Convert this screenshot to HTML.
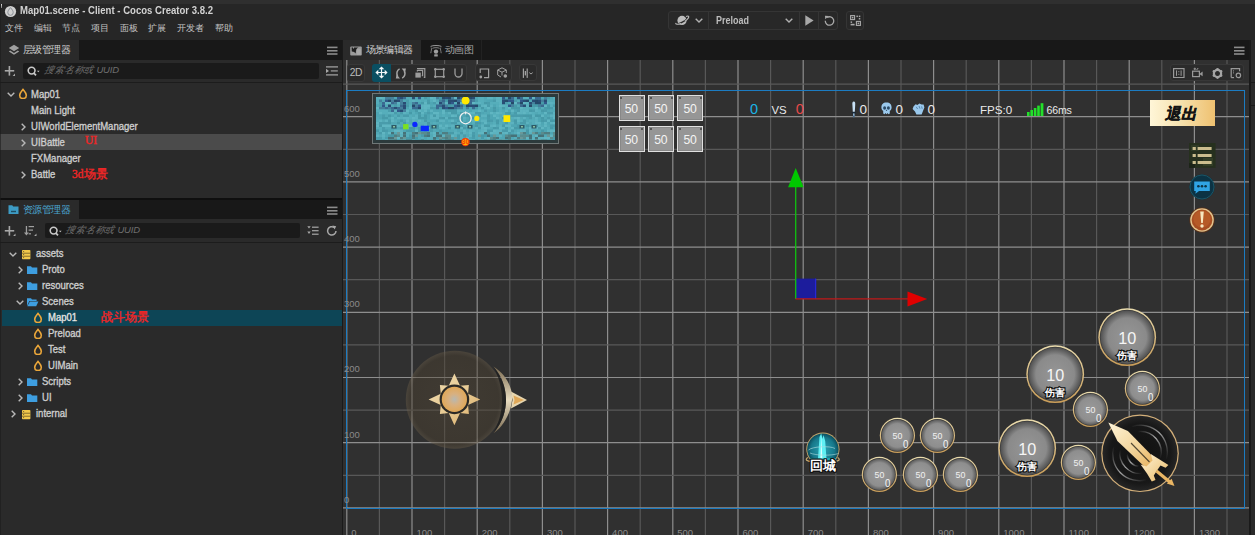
<!DOCTYPE html>
<html><head><meta charset="utf-8">
<style>
*{margin:0;padding:0;box-sizing:border-box}
html,body{width:1255px;height:535px;overflow:hidden;background:#262626;font-family:"Liberation Sans",sans-serif;position:relative}
.a{position:absolute}
.t{position:absolute;white-space:nowrap;line-height:1}
#topstrip{left:0;top:0;width:1255px;height:4px;background:#2f2f2f}
#title{left:19.5px;top:6px;font-size:10.3px;font-weight:bold;color:#d2d2d2;transform-origin:0 0;transform:scaleX(0.929)}
.menu{top:23.9px;font-size:9.1px;color:#c2c2c2}
/* left panel */
.tabbar{background:#181818}
.tab{background:#2a2a2a}
.panelbg{background:#2a2a2a}
.row{position:absolute;left:0;width:342px;height:16px}
.lbl{position:absolute;font-size:10.3px;color:#cdcdcd;white-space:nowrap;line-height:16px;font-weight:normal;-webkit-text-stroke:0.35px #cdcdcd;transform-origin:0 0;transform:translateY(1.1px) scaleX(0.925)}
.tabt{font-size:9.6px;color:#d0d0d0;letter-spacing:-0.55px}
.sbox{background:#1a1a1a;border-radius:2px}
.ph{font-size:9.5px;letter-spacing:-0.2px;color:#6e6e6e;font-style:italic}
.rl{font-size:9.5px;color:#8a8a8a}
.tbg{background:#2b2b2b;border:1px solid #383838;border-radius:3px}
.box50{width:26px;height:26px;background:#969696;border:1.3px solid #e0e0e0;box-shadow:inset 0 0 0 0.5px #7a7a7a}
.box50 span{position:absolute;left:0;top:6.8px;width:23.2px;text-align:center;font-size:12.2px;color:#f4f4f4;line-height:1;letter-spacing:-0.3px}
.box50:before,.box50:after{content:"";position:absolute;top:0.6px;width:2px;height:2px;background:#555}
.box50:before{left:0.6px}.box50:after{right:0.6px}
.red{position:absolute;color:#ee2626;font-size:11.5px;font-weight:normal;-webkit-text-stroke:0.4px #ee2626;font-family:"Liberation Serif",serif;white-space:nowrap;line-height:16px}
</style></head><body>
<div id="topstrip" class="a"></div>
<!-- title icon -->
<div class="a" style="left:1.2px;top:4px;width:1.3px;height:3.5px;background:linear-gradient(#ddd,#777)"></div>
<svg class="a" style="left:4px;top:5px" width="13" height="13" viewBox="0 0 13 13">
<circle cx="6.5" cy="6.5" r="5.6" fill="#d0d0d0"/>
<path d="M6.5 2.6 C8.2 4.6 9.2 6 9.2 7.6 A2.7 2.7 0 0 1 3.8 7.6 C3.8 6 4.8 4.6 6.5 2.6Z" fill="none" stroke="#8a8f96" stroke-width="1"/>
</svg>
<div id="title" class="t">Map01.scene - Client - Cocos Creator 3.8.2</div>
<div class="t menu" style="left:5px">文件</div>
<div class="t menu" style="left:34px">编辑</div>
<div class="t menu" style="left:62px">节点</div>
<div class="t menu" style="left:91px">项目</div>
<div class="t menu" style="left:120px">面板</div>
<div class="t menu" style="left:148px">扩展</div>
<div class="t menu" style="left:177px">开发者</div>
<div class="t menu" style="left:215px">帮助</div>


<!-- top toolbar -->
<div class="a" style="left:668.2px;top:11.3px;width:170.2px;height:18.6px;background:#282828;border:1px solid #353535;border-radius:3px"></div>
<div class="a" style="left:708px;top:12px;width:1px;height:17px;background:#353535"></div>
<div class="a" style="left:799px;top:12px;width:1px;height:17px;background:#353535"></div>
<div class="a" style="left:818.3px;top:12px;width:1px;height:17px;background:#353535"></div>
<svg class="a" style="left:675px;top:14px" width="15" height="12" viewBox="0 0 15 12"><circle cx="7" cy="6.4" r="4.6" fill="#bcbcbc"/><path d="M0.8 9.6 C2 11 10 8 14 3" fill="none" stroke="#282828" stroke-width="1.4"/><path d="M1 9 C0 10.6 3 10.6 6 9.4 M9.8 7.4 C12.5 5.4 14.6 3 13.4 2.2 C12.8 1.9 11.8 2.2 11 2.6" fill="none" stroke="#bcbcbc" stroke-width="1.1"/></svg>
<svg class="a" style="left:695px;top:17.5px" width="8" height="5" viewBox="0 0 8 5"><path d="M0.7 0.7 L4 4 L7.3 0.7" fill="none" stroke="#b0b0b0" stroke-width="1.4"/></svg>
<div class="t" style="left:715.6px;top:15.6px;font-size:10.3px;font-weight:bold;color:#bdbdbd;transform-origin:0 0;transform:scaleX(0.87)">Preload</div>
<svg class="a" style="left:785px;top:17.5px" width="8" height="5" viewBox="0 0 8 5"><path d="M0.7 0.7 L4 4 L7.3 0.7" fill="none" stroke="#b0b0b0" stroke-width="1.4"/></svg>
<svg class="a" style="left:805px;top:15px" width="9" height="11" viewBox="0 0 9 11"><path d="M0.3 0.3 L8.6 5.5 L0.3 10.7Z" fill="#a8a8a8"/></svg>
<svg class="a" style="left:823.5px;top:15px" width="11" height="11" viewBox="0 0 11 11"><path d="M3 2.6 A4.2 4.2 0 1 1 1.3 5.8" fill="none" stroke="#a8a8a8" stroke-width="1.3"/><path d="M1 0.8 L4.8 1 L1.2 4.2Z" fill="#a8a8a8"/></svg>
<div class="a" style="left:845.9px;top:11.3px;width:18.3px;height:18.6px;background:#282828;border:1px solid #353535;border-radius:3px"></div>
<svg class="a" style="left:850px;top:15px" width="11" height="11" viewBox="0 0 11 11"><rect x="0.6" y="0.6" width="4" height="4" fill="none" stroke="#aaa" stroke-width="1.1"/><rect x="1.8" y="1.8" width="1.6" height="1.6" fill="#aaa"/><rect x="6.4" y="0.6" width="1.5" height="1.5" fill="#aaa"/><rect x="8.8" y="0.6" width="1.5" height="1.5" fill="#aaa"/><rect x="8.8" y="3" width="1.5" height="1.5" fill="#aaa"/><rect x="0.6" y="6.4" width="1.5" height="1.5" fill="#aaa"/><rect x="0.6" y="8.8" width="4" height="1.6" fill="#aaa"/><rect x="6.4" y="6.4" width="4" height="4" fill="none" stroke="#aaa" stroke-width="1.1"/><rect x="7.6" y="7.6" width="1.6" height="1.6" fill="#aaa"/></svg>

<!-- ============ LEFT PANELS ============ -->
<div class="a tabbar" style="left:0;top:40px;width:342px;height:20px"></div>
<div class="a tab" style="left:0;top:40px;width:79px;height:20px"></div>
<div class="a panelbg" style="left:0;top:60px;width:342px;height:138px"></div>
<div class="a" style="left:0;top:198.2px;width:342px;height:2px;background:#0f0f0f"></div>
<div class="a tabbar" style="left:0;top:200px;width:342px;height:19px"></div>
<div class="a tab" style="left:0;top:200px;width:79px;height:19px"></div>
<div class="a panelbg" style="left:0;top:219px;width:342px;height:316px"></div>
<div class="a" style="left:342px;top:40px;width:1px;height:495px;background:#1a1a1a"></div>


<!-- hierarchy tab -->
<svg class="a" style="left:8px;top:44px" width="12" height="13" viewBox="0 0 12 13">
<path d="M6 0.8 L11.2 4 L6 7.2 L0.8 4Z" fill="#a0a0a0"/>
<path d="M2.2 6.6 L0.8 7.6 L6 10.8 L11.2 7.6 L9.8 6.6 L6 9 Z" fill="#a0a0a0"/>
</svg>
<div class="t tabt" style="left:23px;top:45px">层级管理器</div>
<svg class="a" style="left:327px;top:46px" width="11" height="10" viewBox="0 0 11 10"><rect x="0" y="0.6" width="10.5" height="1.6" fill="#8c8c8c"/><rect x="0" y="4" width="10.5" height="1.6" fill="#8c8c8c"/><rect x="0" y="7.2" width="10.5" height="1.6" fill="#8c8c8c"/></svg>
<!-- hierarchy toolbar -->
<svg class="a" style="left:4px;top:65px" width="12" height="12" viewBox="0 0 12 12"><rect x="4.6" y="1" width="1.6" height="9.6" fill="#a8a8a8"/><rect x="0.8" y="5" width="9.4" height="1.6" fill="#a8a8a8"/><path d="M11 8.6 L11 11 L8.6 11Z" fill="#a8a8a8"/></svg>
<div class="a sbox" style="left:23px;top:63px;width:296px;height:15.5px"></div>
<svg class="a" style="left:27px;top:66px" width="13" height="11" viewBox="0 0 13 11"><circle cx="4.6" cy="4.6" r="3.4" fill="none" stroke="#c8c8c8" stroke-width="1.6"/><path d="M6.8 7 L9 9.4" stroke="#c8c8c8" stroke-width="1.8"/><path d="M10 4.8 L12.6 4.8 L11.3 6.2Z" fill="#c8c8c8"/></svg>
<div class="t ph" style="left:45px;top:65px"><span style="display:inline-block;transform:skewX(-13deg)">搜索名称或</span> UUID</div>
<svg class="a" style="left:326px;top:66px" width="12" height="10" viewBox="0 0 12 10"><rect x="0" y="0.3" width="12" height="1.2" fill="#a8a8a8"/><rect x="0" y="8.3" width="12" height="1.2" fill="#a8a8a8"/><rect x="4.8" y="4.2" width="7" height="1.4" fill="#909090"/><path d="M0 2.8 L3 4.9 L0 7Z" fill="#a8a8a8"/></svg>
<div class="a" style="left:0;top:82px;width:342px;height:1px;background:#1c1c1c"></div>
<!-- hierarchy tree -->
<div class="row" style="top:134.3px;height:15.6px;background:#4b4b4b"></div>
<svg class="a" style="left:7px;top:92px" width="8" height="5" viewBox="0 0 8 5"><path d="M0.7 0.7 L4 4 L7.3 0.7" fill="none" stroke="#b8b8b8" stroke-width="1.4"/></svg>
<svg class="a drop" style="left:18px;top:88px" width="10" height="11" viewBox="0 0 10 11"><path d="M5 1.4 C6.2 3 8.3 4.8 8.3 7.2 A3.3 3.3 0 0 1 1.7 7.2 C1.7 4.8 3.8 3 5 1.4Z" fill="none" stroke="#eaa63a" stroke-width="1.6" stroke-linejoin="round"/><path d="M5 0.3 L5.8 2 L4.2 2Z" fill="#eaa63a"/></svg>
<div class="lbl" style="left:31px;top:86px">Map01</div>
<div class="lbl" style="left:31px;top:102px">Main Light</div>
<svg class="a" style="left:21px;top:122.5px" width="5" height="8" viewBox="0 0 5 8"><path d="M0.7 0.7 L4 4 L0.7 7.3" fill="none" stroke="#b8b8b8" stroke-width="1.4"/></svg>
<div class="lbl" style="left:31px;top:118px">UIWorldElementManager</div>
<svg class="a" style="left:21px;top:138.5px" width="5" height="8" viewBox="0 0 5 8"><path d="M0.7 0.7 L4 4 L0.7 7.3" fill="none" stroke="#b8b8b8" stroke-width="1.4"/></svg>
<div class="lbl" style="left:31px;top:134px">UIBattle</div>
<div class="red" style="left:85px;top:132.2px">UI</div>
<div class="lbl" style="left:31px;top:150px">FXManager</div>
<svg class="a" style="left:21px;top:170.5px" width="5" height="8" viewBox="0 0 5 8"><path d="M0.7 0.7 L4 4 L0.7 7.3" fill="none" stroke="#b8b8b8" stroke-width="1.4"/></svg>
<div class="lbl" style="left:31px;top:166px">Battle</div>
<div class="red" style="left:72px;top:165.5px">3d场景</div>

<!-- assets tab -->
<svg class="a" style="left:8px;top:204px" width="11" height="11" viewBox="0 0 11 11"><path d="M0.5 1.2 L4.2 1.2 L5.2 2.4 L10.5 2.4 L10.5 10 L0.5 10Z" fill="#3d9bc4"/><rect x="3" y="6.8" width="5" height="1.4" fill="#1f4c60"/></svg>
<div class="t tabt" style="left:23px;top:204.5px;color:#4aa6d0">资源管理器</div>
<svg class="a" style="left:327px;top:206px" width="11" height="10" viewBox="0 0 11 10"><rect x="0" y="0.6" width="10.5" height="1.6" fill="#8c8c8c"/><rect x="0" y="4" width="10.5" height="1.6" fill="#8c8c8c"/><rect x="0" y="7.2" width="10.5" height="1.6" fill="#8c8c8c"/></svg>
<!-- asset toolbar -->
<svg class="a" style="left:4px;top:225px" width="12" height="12" viewBox="0 0 12 12"><rect x="4.6" y="1" width="1.6" height="9.6" fill="#a8a8a8"/><rect x="0.8" y="5" width="9.4" height="1.6" fill="#a8a8a8"/><path d="M11.5 8.6 L11.5 11 L9.1 11Z" fill="#a8a8a8"/></svg>
<svg class="a" style="left:24px;top:225px" width="13" height="12" viewBox="0 0 13 12"><rect x="1.8" y="1" width="1.3" height="8" fill="#a0a0a0"/><path d="M0 7.6 L4.8 7.6 L2.4 10.4Z" fill="#a0a0a0"/><rect x="4.6" y="1" width="5.4" height="1.2" fill="#a0a0a0"/><rect x="4.6" y="4.5" width="4.4" height="1.2" fill="#a0a0a0"/><rect x="4.6" y="8.2" width="2.4" height="1.2" fill="#a0a0a0"/><path d="M12.5 8.6 L12.5 11 L10.1 11Z" fill="#a8a8a8"/></svg>
<div class="a sbox" style="left:44.5px;top:223px;width:255px;height:15px"></div>
<svg class="a" style="left:48.5px;top:226px" width="13" height="11" viewBox="0 0 13 11"><circle cx="4.6" cy="4.6" r="3.4" fill="none" stroke="#c8c8c8" stroke-width="1.6"/><path d="M6.8 7 L9 9.4" stroke="#c8c8c8" stroke-width="1.8"/><path d="M10 4.8 L12.6 4.8 L11.3 6.2Z" fill="#c8c8c8"/></svg>
<div class="t ph" style="left:66px;top:225px"><span style="display:inline-block;transform:skewX(-13deg)">搜索名称或</span> UUID</div>
<svg class="a" style="left:307px;top:225px" width="13" height="11" viewBox="0 0 13 11"><path d="M0.3 1.3 L3.7 1.3 L2 3.6Z M0.3 6.6 L3.7 6.6 L2 8.9Z" fill="#a8a8a8"/><rect x="5" y="1.6" width="6.6" height="1.2" fill="#a8a8a8"/><rect x="5" y="5.1" width="6.6" height="1.2" fill="#a8a8a8"/><rect x="5" y="8.6" width="6.6" height="1.2" fill="#a8a8a8"/></svg>
<svg class="a" style="left:326px;top:225px" width="12" height="12" viewBox="0 0 12 12"><path d="M10 6 A4.2 4.2 0 1 1 8.2 2.4" fill="none" stroke="#a8a8a8" stroke-width="1.5"/><path d="M6.4 0.6 L10.2 1.2 L8.6 4.6Z" fill="#a8a8a8"/></svg>
<div class="a" style="left:0;top:241.5px;width:342px;height:1px;background:#1c1c1c"></div>
<!-- asset tree -->
<div class="row" style="top:309.5px;height:16px;left:2px;width:340px;background:#0d4556"></div>

<svg class="a" style="left:9px;top:251.5px" width="8" height="5" viewBox="0 0 8 5"><path d="M0.7 0.7 L4 4 L7.3 0.7" fill="none" stroke="#b8b8b8" stroke-width="1.4"/></svg>
<svg class="a" style="left:21.8px;top:249.7px" width="9" height="10" viewBox="0 0 9 10"><rect x="0" y="0" width="8.4" height="9.2" rx="0.8" fill="#f2c94c"/><rect x="0" y="2.8" width="8.4" height="0.7" fill="#5a4a20"/><rect x="0" y="5.8" width="8.4" height="0.7" fill="#5a4a20"/><rect x="1.2" y="1.1" width="0.9" height="0.9" fill="#5a4a20"/><rect x="1.2" y="4.1" width="0.9" height="0.9" fill="#5a4a20"/><rect x="1.2" y="7.2" width="0.9" height="0.9" fill="#5a4a20"/></svg>
<div class="lbl" style="left:35.5px;top:244.7px">assets</div>
<svg class="a" style="left:17.5px;top:265.5px" width="5" height="8" viewBox="0 0 5 8"><path d="M0.7 0.7 L4 4 L0.7 7.3" fill="none" stroke="#b8b8b8" stroke-width="1.4"/></svg>
<svg class="a" style="left:27px;top:266.0px" width="11" height="9" viewBox="0 0 11 9"><path d="M0 0.3 L4 0.3 L5 1.4 L10.3 1.4 L10.3 8 L0 8Z" fill="#3e9ee0"/></svg>
<div class="lbl" style="left:41.5px;top:260.7px">Proto</div>
<svg class="a" style="left:17.5px;top:281.5px" width="5" height="8" viewBox="0 0 5 8"><path d="M0.7 0.7 L4 4 L0.7 7.3" fill="none" stroke="#b8b8b8" stroke-width="1.4"/></svg>
<svg class="a" style="left:27px;top:282.0px" width="11" height="9" viewBox="0 0 11 9"><path d="M0 0.3 L4 0.3 L5 1.4 L10.3 1.4 L10.3 8 L0 8Z" fill="#3e9ee0"/></svg>
<div class="lbl" style="left:41.5px;top:276.7px">resources</div>
<svg class="a" style="left:16px;top:299.5px" width="8" height="5" viewBox="0 0 8 5"><path d="M0.7 0.7 L4 4 L7.3 0.7" fill="none" stroke="#b8b8b8" stroke-width="1.4"/></svg>
<svg class="a" style="left:27px;top:297.8px" width="12" height="9" viewBox="0 0 12 9"><path d="M0 0.3 L4 0.3 L5 1.4 L9.6 1.4 L9.6 3 L2.4 3 L0 8Z" fill="#3e9ee0"/><path d="M2.8 3.6 L11.4 3.6 L9.2 8.2 L0.4 8.2Z" fill="#3e9ee0"/></svg>
<div class="lbl" style="left:41.5px;top:292.7px">Scenes</div>
<svg class="a" style="left:33px;top:311.6px" width="10" height="11" viewBox="0 0 10 11"><path d="M5 1.4 C6.2 3 8.3 4.8 8.3 7.2 A3.3 3.3 0 0 1 1.7 7.2 C1.7 4.8 3.8 3 5 1.4Z" fill="none" stroke="#eaa63a" stroke-width="1.6" stroke-linejoin="round"/><path d="M5 0.3 L5.8 2 L4.2 2Z" fill="#eaa63a"/></svg>
<div class="lbl" style="left:48.3px;top:308.7px;color:#fff">Map01</div>
<svg class="a" style="left:33px;top:327.6px" width="10" height="11" viewBox="0 0 10 11"><path d="M5 1.4 C6.2 3 8.3 4.8 8.3 7.2 A3.3 3.3 0 0 1 1.7 7.2 C1.7 4.8 3.8 3 5 1.4Z" fill="none" stroke="#eaa63a" stroke-width="1.6" stroke-linejoin="round"/><path d="M5 0.3 L5.8 2 L4.2 2Z" fill="#eaa63a"/></svg>
<div class="lbl" style="left:48.3px;top:324.7px">Preload</div>
<svg class="a" style="left:33px;top:343.6px" width="10" height="11" viewBox="0 0 10 11"><path d="M5 1.4 C6.2 3 8.3 4.8 8.3 7.2 A3.3 3.3 0 0 1 1.7 7.2 C1.7 4.8 3.8 3 5 1.4Z" fill="none" stroke="#eaa63a" stroke-width="1.6" stroke-linejoin="round"/><path d="M5 0.3 L5.8 2 L4.2 2Z" fill="#eaa63a"/></svg>
<div class="lbl" style="left:48.3px;top:340.7px">Test</div>
<svg class="a" style="left:33px;top:359.6px" width="10" height="11" viewBox="0 0 10 11"><path d="M5 1.4 C6.2 3 8.3 4.8 8.3 7.2 A3.3 3.3 0 0 1 1.7 7.2 C1.7 4.8 3.8 3 5 1.4Z" fill="none" stroke="#eaa63a" stroke-width="1.6" stroke-linejoin="round"/><path d="M5 0.3 L5.8 2 L4.2 2Z" fill="#eaa63a"/></svg>
<div class="lbl" style="left:48.3px;top:356.7px">UIMain</div>
<svg class="a" style="left:17.5px;top:377.5px" width="5" height="8" viewBox="0 0 5 8"><path d="M0.7 0.7 L4 4 L0.7 7.3" fill="none" stroke="#b8b8b8" stroke-width="1.4"/></svg>
<svg class="a" style="left:27px;top:378.0px" width="11" height="9" viewBox="0 0 11 9"><path d="M0 0.3 L4 0.3 L5 1.4 L10.3 1.4 L10.3 8 L0 8Z" fill="#3e9ee0"/></svg>
<div class="lbl" style="left:41.5px;top:372.7px">Scripts</div>
<svg class="a" style="left:17.5px;top:393.5px" width="5" height="8" viewBox="0 0 5 8"><path d="M0.7 0.7 L4 4 L0.7 7.3" fill="none" stroke="#b8b8b8" stroke-width="1.4"/></svg>
<svg class="a" style="left:27px;top:394.0px" width="11" height="9" viewBox="0 0 11 9"><path d="M0 0.3 L4 0.3 L5 1.4 L10.3 1.4 L10.3 8 L0 8Z" fill="#3e9ee0"/></svg>
<div class="lbl" style="left:41.5px;top:388.7px">UI</div>
<svg class="a" style="left:11px;top:409.5px" width="5" height="8" viewBox="0 0 5 8"><path d="M0.7 0.7 L4 4 L0.7 7.3" fill="none" stroke="#b8b8b8" stroke-width="1.4"/></svg>
<svg class="a" style="left:21.8px;top:409.7px" width="9" height="10" viewBox="0 0 9 10"><rect x="0" y="0" width="8.4" height="9.2" rx="0.8" fill="#f2c94c"/><rect x="0" y="2.8" width="8.4" height="0.7" fill="#5a4a20"/><rect x="0" y="5.8" width="8.4" height="0.7" fill="#5a4a20"/><rect x="1.2" y="1.1" width="0.9" height="0.9" fill="#5a4a20"/><rect x="1.2" y="4.1" width="0.9" height="0.9" fill="#5a4a20"/><rect x="1.2" y="7.2" width="0.9" height="0.9" fill="#5a4a20"/></svg>
<div class="lbl" style="left:35.5px;top:404.7px">internal</div>
<div class="red" style="left:101px;top:309px">战斗场景</div>
<div class="a" style="left:0;top:4px;width:1px;height:531px;background:#1c1c1c;opacity:0.6"></div>
<!-- ============ SCENE PANEL ============ -->
<div class="a tabbar" style="left:343px;top:40px;width:906px;height:20px"></div>
<div class="a tab" style="left:343px;top:40px;width:78px;height:20px"></div>

<!-- scene tabs -->
<svg class="a" style="left:350px;top:45.5px" width="12" height="10" viewBox="0 0 12 10"><rect x="0.2" y="0.4" width="11.6" height="9.2" rx="1" fill="#9a9a9a"/><path d="M1.6 1.4 L3 1.4 L3 2.6 L4 2.6 L4 1.4 L8.6 1.4 L7.4 2 L6.4 3.2 L6 5 L5.6 7.6 L4.8 6.4 L3.4 5.8 L1.8 5.6Z" fill="#1e1e1e"/><rect x="6.8" y="3" width="4" height="5.8" fill="#a8a8a8"/></svg>
<div class="t tabt" style="left:365.5px;top:45px">场景编辑器</div>
<svg class="a" style="left:429.5px;top:44.5px" width="12" height="12" viewBox="0 0 12 12"><path d="M0.6 1.4 C3 0.2 9 0.2 11.4 1.4" fill="none" stroke="#9a9a9a" stroke-width="1"/><path d="M1.2 2.6 C2 4 1 6 0.8 8.2 M10.8 2.6 C10 4 11 6 11.2 8.2" fill="none" stroke="#8a8a8a" stroke-width="0.9"/><path d="M2.4 3.4 C4 2.4 8 2.4 9.6 3.4" fill="none" stroke="#8a8a8a" stroke-width="0.9"/><circle cx="6" cy="6.6" r="2.2" fill="#a0a0a0"/><rect x="4.2" y="9.2" width="3.6" height="2.4" rx="0.6" fill="#9a9a9a"/></svg>
<div class="t tabt" style="left:445px;top:45px;color:#a8a8a8">动画图</div>
<div class="a" style="left:481px;top:40px;width:1px;height:20px;background:#222"></div>
<svg class="a" style="left:1233.5px;top:46px" width="11" height="10" viewBox="0 0 11 10"><rect x="0" y="0.6" width="10.5" height="1.6" fill="#8c8c8c"/><rect x="0" y="4" width="10.5" height="1.6" fill="#8c8c8c"/><rect x="0" y="7.2" width="10.5" height="1.6" fill="#8c8c8c"/></svg>
<div class="a" id="scene" style="left:343px;top:60px;width:906px;height:475px;background:#303030;overflow:hidden">
<svg id="grid" width="906" height="475" style="position:absolute;left:0;top:0">
<line x1="3.80" y1="0" x2="3.80" y2="475" stroke="#8e8e8e" stroke-width="1.2"/>
<line x1="36.40" y1="0" x2="36.40" y2="475" stroke="#585858" stroke-width="1.2"/>
<line x1="69.00" y1="0" x2="69.00" y2="475" stroke="#8e8e8e" stroke-width="1.2"/>
<line x1="101.60" y1="0" x2="101.60" y2="475" stroke="#585858" stroke-width="1.2"/>
<line x1="134.20" y1="0" x2="134.20" y2="475" stroke="#8e8e8e" stroke-width="1.2"/>
<line x1="166.80" y1="0" x2="166.80" y2="475" stroke="#585858" stroke-width="1.2"/>
<line x1="199.40" y1="0" x2="199.40" y2="475" stroke="#8e8e8e" stroke-width="1.2"/>
<line x1="232.00" y1="0" x2="232.00" y2="475" stroke="#585858" stroke-width="1.2"/>
<line x1="264.60" y1="0" x2="264.60" y2="475" stroke="#8e8e8e" stroke-width="1.2"/>
<line x1="297.20" y1="0" x2="297.20" y2="475" stroke="#585858" stroke-width="1.2"/>
<line x1="329.80" y1="0" x2="329.80" y2="475" stroke="#8e8e8e" stroke-width="1.2"/>
<line x1="362.40" y1="0" x2="362.40" y2="475" stroke="#585858" stroke-width="1.2"/>
<line x1="395.00" y1="0" x2="395.00" y2="475" stroke="#8e8e8e" stroke-width="1.2"/>
<line x1="427.60" y1="0" x2="427.60" y2="475" stroke="#585858" stroke-width="1.2"/>
<line x1="460.20" y1="0" x2="460.20" y2="475" stroke="#8e8e8e" stroke-width="1.2"/>
<line x1="492.80" y1="0" x2="492.80" y2="475" stroke="#585858" stroke-width="1.2"/>
<line x1="525.40" y1="0" x2="525.40" y2="475" stroke="#8e8e8e" stroke-width="1.2"/>
<line x1="558.00" y1="0" x2="558.00" y2="475" stroke="#585858" stroke-width="1.2"/>
<line x1="590.60" y1="0" x2="590.60" y2="475" stroke="#8e8e8e" stroke-width="1.2"/>
<line x1="623.20" y1="0" x2="623.20" y2="475" stroke="#585858" stroke-width="1.2"/>
<line x1="655.80" y1="0" x2="655.80" y2="475" stroke="#8e8e8e" stroke-width="1.2"/>
<line x1="688.40" y1="0" x2="688.40" y2="475" stroke="#585858" stroke-width="1.2"/>
<line x1="721.00" y1="0" x2="721.00" y2="475" stroke="#8e8e8e" stroke-width="1.2"/>
<line x1="753.60" y1="0" x2="753.60" y2="475" stroke="#585858" stroke-width="1.2"/>
<line x1="786.20" y1="0" x2="786.20" y2="475" stroke="#8e8e8e" stroke-width="1.2"/>
<line x1="818.80" y1="0" x2="818.80" y2="475" stroke="#585858" stroke-width="1.2"/>
<line x1="851.40" y1="0" x2="851.40" y2="475" stroke="#8e8e8e" stroke-width="1.2"/>
<line x1="884.00" y1="0" x2="884.00" y2="475" stroke="#585858" stroke-width="1.2"/>
<line x1="0" y1="447.90" x2="906" y2="447.90" stroke="#8e8e8e" stroke-width="1.2"/>
<line x1="0" y1="415.30" x2="906" y2="415.30" stroke="#585858" stroke-width="1.2"/>
<line x1="0" y1="382.70" x2="906" y2="382.70" stroke="#8e8e8e" stroke-width="1.2"/>
<line x1="0" y1="350.10" x2="906" y2="350.10" stroke="#585858" stroke-width="1.2"/>
<line x1="0" y1="317.50" x2="906" y2="317.50" stroke="#8e8e8e" stroke-width="1.2"/>
<line x1="0" y1="284.90" x2="906" y2="284.90" stroke="#585858" stroke-width="1.2"/>
<line x1="0" y1="252.30" x2="906" y2="252.30" stroke="#8e8e8e" stroke-width="1.2"/>
<line x1="0" y1="219.70" x2="906" y2="219.70" stroke="#585858" stroke-width="1.2"/>
<line x1="0" y1="187.10" x2="906" y2="187.10" stroke="#8e8e8e" stroke-width="1.2"/>
<line x1="0" y1="154.50" x2="906" y2="154.50" stroke="#585858" stroke-width="1.2"/>
<line x1="0" y1="121.90" x2="906" y2="121.90" stroke="#8e8e8e" stroke-width="1.2"/>
<line x1="0" y1="89.30" x2="906" y2="89.30" stroke="#585858" stroke-width="1.2"/>
<line x1="0" y1="56.70" x2="906" y2="56.70" stroke="#8e8e8e" stroke-width="1.2"/>
<line x1="0" y1="24.10" x2="906" y2="24.10" stroke="#585858" stroke-width="1.2"/>
</svg>
</div>
<div class="a" style="left:1249px;top:40px;width:1.5px;height:495px;background:#1a1a1a"></div>
<div class="a" style="left:1250.5px;top:40px;width:4.5px;height:495px;background:#2a2a2a"></div>
<div class="a" style="left:1250.5px;top:82px;width:4.5px;height:1px;background:#1a1a1a"></div>
<div class="a" style="left:1250.5px;top:105px;width:4.5px;height:1px;background:#1a1a1a"></div>


<!-- gizmo -->
<svg class="a" style="left:780px;top:160px" width="155" height="150" viewBox="780 160 155 150">
<rect x="795.5" y="278.6" width="20.6" height="20.3" fill="#1c1c9c"/>
<rect x="815" y="278.6" width="1.2" height="20.3" fill="#2626d8"/>
<line x1="795.7" y1="186" x2="795.7" y2="299" stroke="#10c010" stroke-width="1.3"/>
<path d="M795.7 167.9 L803.6 187.3 L788.1 187.3Z" fill="#00c800"/>
<line x1="795.5" y1="298.9" x2="908" y2="298.9" stroke="#c01818" stroke-width="1.4"/>
<path d="M927.2 299 L907.5 306.5 L907.5 291.5Z" fill="#e00000"/>
</svg>
<!-- minimap -->
<div class="a" style="left:371.7px;top:93.1px;width:187.7px;height:50.7px;background:#2c3a3c;border:1px solid #6f7777"></div>
<svg class="a" style="left:375.8px;top:96.8px" width="179.2" height="43" viewBox="0 0 179.2 43">
<defs><filter id="mmblur" x="0" y="0" width="1" height="1"><feGaussianBlur stdDeviation="0.45"/></filter></defs><g filter="url(#mmblur)"><rect width="179.2" height="43" fill="#50a7b5"/><rect x="0" y="0" width="3" height="2.5" fill="#5cb2bf"/><rect x="3" y="0" width="3" height="2.5" fill="#60b6c2"/><rect x="6" y="0" width="3" height="2.5" fill="#5cb2bf"/><rect x="9" y="0" width="3" height="2.5" fill="#44809c"/><rect x="12" y="0" width="3" height="2.5" fill="#44809c"/><rect x="15" y="0" width="3" height="2.5" fill="#44809c"/><rect x="18" y="0" width="3" height="2.5" fill="#4fa6b4"/><rect x="21" y="0" width="3" height="2.5" fill="#31598a"/><rect x="24" y="0" width="3" height="2.5" fill="#2a4e74"/><rect x="27" y="0" width="3" height="2.5" fill="#3a6a90"/><rect x="30" y="0" width="3" height="2.5" fill="#52a9b6"/><rect x="33" y="0" width="3" height="2.5" fill="#52a9b6"/><rect x="36" y="0" width="3" height="2.5" fill="#2a4e74"/><rect x="39" y="0" width="3" height="2.5" fill="#4fa6b4"/><rect x="42" y="0" width="3" height="2.5" fill="#31598a"/><rect x="45" y="0" width="3" height="2.5" fill="#56aebb"/><rect x="48" y="0" width="3" height="2.5" fill="#469aa8"/><rect x="51" y="0" width="3" height="2.5" fill="#4fa6b4"/><rect x="54" y="0" width="3" height="2.5" fill="#60b6c2"/><rect x="57" y="0" width="3" height="2.5" fill="#5cb2bf"/><rect x="60" y="0" width="3" height="2.5" fill="#44809c"/><rect x="63" y="0" width="3" height="2.5" fill="#469aa8"/><rect x="66" y="0" width="3" height="2.5" fill="#264a6a"/><rect x="69" y="0" width="3" height="2.5" fill="#2a4e74"/><rect x="72" y="0" width="3" height="2.5" fill="#264a6a"/><rect x="75" y="0" width="3" height="2.5" fill="#44809c"/><rect x="78" y="0" width="3" height="2.5" fill="#60b6c2"/><rect x="81" y="0" width="3" height="2.5" fill="#264a6a"/><rect x="84" y="0" width="3" height="2.5" fill="#31598a"/><rect x="87" y="0" width="3" height="2.5" fill="#2a4e74"/><rect x="90" y="0" width="3" height="2.5" fill="#2a4e74"/><rect x="93" y="0" width="3" height="2.5" fill="#264a6a"/><rect x="96" y="0" width="3" height="2.5" fill="#2a4e74"/><rect x="99" y="0" width="3" height="2.5" fill="#4fa6b4"/><rect x="102" y="0" width="3" height="2.5" fill="#56aebb"/><rect x="105" y="0" width="3" height="2.5" fill="#56aebb"/><rect x="108" y="0" width="3" height="2.5" fill="#4fa6b4"/><rect x="111" y="0" width="3" height="2.5" fill="#5cb2bf"/><rect x="114" y="0" width="3" height="2.5" fill="#5cb2bf"/><rect x="117" y="0" width="3" height="2.5" fill="#52a9b6"/><rect x="120" y="0" width="3" height="2.5" fill="#5cb2bf"/><rect x="123" y="0" width="3" height="2.5" fill="#5cb2bf"/><rect x="126" y="0" width="3" height="2.5" fill="#31598a"/><rect x="129" y="0" width="3" height="2.5" fill="#4a9cab"/><rect x="132" y="0" width="3" height="2.5" fill="#264a6a"/><rect x="135" y="0" width="3" height="2.5" fill="#3a6a90"/><rect x="138" y="0" width="3" height="2.5" fill="#4fa6b4"/><rect x="141" y="0" width="3" height="2.5" fill="#2a4e74"/><rect x="144" y="0" width="3" height="2.5" fill="#3a6a90"/><rect x="147" y="0" width="3" height="2.5" fill="#56aebb"/><rect x="150" y="0" width="3" height="2.5" fill="#56aebb"/><rect x="153" y="0" width="3" height="2.5" fill="#31598a"/><rect x="156" y="0" width="3" height="2.5" fill="#60b6c2"/><rect x="159" y="0" width="3" height="2.5" fill="#3a6a90"/><rect x="162" y="0" width="3" height="2.5" fill="#3a6a90"/><rect x="165" y="0" width="3" height="2.5" fill="#4fa6b4"/><rect x="168" y="0" width="3" height="2.5" fill="#44809c"/><rect x="171" y="0" width="3" height="2.5" fill="#4a9cab"/><rect x="174" y="0" width="3" height="2.5" fill="#4fa6b4"/><rect x="177" y="0" width="3" height="2.5" fill="#56aebb"/><rect x="0" y="2.5" width="3" height="2.5" fill="#56aebb"/><rect x="3" y="2.5" width="3" height="2.5" fill="#44809c"/><rect x="6" y="2.5" width="3" height="2.5" fill="#4fa6b4"/><rect x="9" y="2.5" width="3" height="2.5" fill="#31598a"/><rect x="12" y="2.5" width="3" height="2.5" fill="#264a6a"/><rect x="15" y="2.5" width="3" height="2.5" fill="#44809c"/><rect x="18" y="2.5" width="3" height="2.5" fill="#264a6a"/><rect x="21" y="2.5" width="3" height="2.5" fill="#2a4e74"/><rect x="24" y="2.5" width="3" height="2.5" fill="#44809c"/><rect x="27" y="2.5" width="3" height="2.5" fill="#4fa6b4"/><rect x="30" y="2.5" width="3" height="2.5" fill="#4a9cab"/><rect x="33" y="2.5" width="3" height="2.5" fill="#56aebb"/><rect x="36" y="2.5" width="3" height="2.5" fill="#5cb2bf"/><rect x="39" y="2.5" width="3" height="2.5" fill="#56aebb"/><rect x="42" y="2.5" width="3" height="2.5" fill="#56aebb"/><rect x="45" y="2.5" width="3" height="2.5" fill="#52a9b6"/><rect x="48" y="2.5" width="3" height="2.5" fill="#56aebb"/><rect x="51" y="2.5" width="3" height="2.5" fill="#4a9cab"/><rect x="54" y="2.5" width="3" height="2.5" fill="#56aebb"/><rect x="57" y="2.5" width="3" height="2.5" fill="#60b6c2"/><rect x="60" y="2.5" width="3" height="2.5" fill="#52a9b6"/><rect x="63" y="2.5" width="3" height="2.5" fill="#44809c"/><rect x="66" y="2.5" width="3" height="2.5" fill="#3a6a90"/><rect x="69" y="2.5" width="3" height="2.5" fill="#469aa8"/><rect x="72" y="2.5" width="3" height="2.5" fill="#2a4e74"/><rect x="75" y="2.5" width="3" height="2.5" fill="#2a4e74"/><rect x="78" y="2.5" width="3" height="2.5" fill="#264a6a"/><rect x="81" y="2.5" width="3" height="2.5" fill="#3a6a90"/><rect x="84" y="2.5" width="3" height="2.5" fill="#44809c"/><rect x="87" y="2.5" width="3" height="2.5" fill="#44809c"/><rect x="90" y="2.5" width="3" height="2.5" fill="#2a4e74"/><rect x="93" y="2.5" width="3" height="2.5" fill="#3a6a90"/><rect x="96" y="2.5" width="3" height="2.5" fill="#44809c"/><rect x="99" y="2.5" width="3" height="2.5" fill="#4a9cab"/><rect x="102" y="2.5" width="3" height="2.5" fill="#56aebb"/><rect x="105" y="2.5" width="3" height="2.5" fill="#56aebb"/><rect x="108" y="2.5" width="3" height="2.5" fill="#52a9b6"/><rect x="111" y="2.5" width="3" height="2.5" fill="#4fa6b4"/><rect x="114" y="2.5" width="3" height="2.5" fill="#4fa6b4"/><rect x="117" y="2.5" width="3" height="2.5" fill="#4a9cab"/><rect x="120" y="2.5" width="3" height="2.5" fill="#5cb2bf"/><rect x="123" y="2.5" width="3" height="2.5" fill="#5cb2bf"/><rect x="126" y="2.5" width="3" height="2.5" fill="#2a4e74"/><rect x="129" y="2.5" width="3" height="2.5" fill="#264a6a"/><rect x="132" y="2.5" width="3" height="2.5" fill="#31598a"/><rect x="135" y="2.5" width="3" height="2.5" fill="#31598a"/><rect x="138" y="2.5" width="3" height="2.5" fill="#4a9cab"/><rect x="141" y="2.5" width="3" height="2.5" fill="#52a9b6"/><rect x="144" y="2.5" width="3" height="2.5" fill="#31598a"/><rect x="147" y="2.5" width="3" height="2.5" fill="#2a4e74"/><rect x="150" y="2.5" width="3" height="2.5" fill="#264a6a"/><rect x="153" y="2.5" width="3" height="2.5" fill="#4fa6b4"/><rect x="156" y="2.5" width="3" height="2.5" fill="#2a4e74"/><rect x="159" y="2.5" width="3" height="2.5" fill="#264a6a"/><rect x="162" y="2.5" width="3" height="2.5" fill="#2a4e74"/><rect x="165" y="2.5" width="3" height="2.5" fill="#44809c"/><rect x="168" y="2.5" width="3" height="2.5" fill="#2a4e74"/><rect x="171" y="2.5" width="3" height="2.5" fill="#52a9b6"/><rect x="174" y="2.5" width="3" height="2.5" fill="#52a9b6"/><rect x="177" y="2.5" width="3" height="2.5" fill="#52a9b6"/><rect x="0" y="5.0" width="3" height="2.5" fill="#56aebb"/><rect x="3" y="5.0" width="3" height="2.5" fill="#4a9cab"/><rect x="6" y="5.0" width="3" height="2.5" fill="#3a6a90"/><rect x="9" y="5.0" width="3" height="2.5" fill="#60b6c2"/><rect x="12" y="5.0" width="3" height="2.5" fill="#60b6c2"/><rect x="15" y="5.0" width="3" height="2.5" fill="#3a6a90"/><rect x="18" y="5.0" width="3" height="2.5" fill="#44809c"/><rect x="21" y="5.0" width="3" height="2.5" fill="#5cb2bf"/><rect x="24" y="5.0" width="3" height="2.5" fill="#44809c"/><rect x="27" y="5.0" width="3" height="2.5" fill="#2a4e74"/><rect x="30" y="5.0" width="3" height="2.5" fill="#4a9cab"/><rect x="33" y="5.0" width="3" height="2.5" fill="#52a9b6"/><rect x="36" y="5.0" width="3" height="2.5" fill="#44809c"/><rect x="39" y="5.0" width="3" height="2.5" fill="#3a6a90"/><rect x="42" y="5.0" width="3" height="2.5" fill="#4fa6b4"/><rect x="45" y="5.0" width="3" height="2.5" fill="#469aa8"/><rect x="48" y="5.0" width="3" height="2.5" fill="#60b6c2"/><rect x="51" y="5.0" width="3" height="2.5" fill="#469aa8"/><rect x="54" y="5.0" width="3" height="2.5" fill="#4fa6b4"/><rect x="57" y="5.0" width="3" height="2.5" fill="#4a9cab"/><rect x="60" y="5.0" width="3" height="2.5" fill="#5cb2bf"/><rect x="63" y="5.0" width="3" height="2.5" fill="#2a4e74"/><rect x="66" y="5.0" width="3" height="2.5" fill="#44809c"/><rect x="69" y="5.0" width="3" height="2.5" fill="#5cb2bf"/><rect x="72" y="5.0" width="3" height="2.5" fill="#2a4e74"/><rect x="75" y="5.0" width="3" height="2.5" fill="#31598a"/><rect x="78" y="5.0" width="3" height="2.5" fill="#56aebb"/><rect x="81" y="5.0" width="3" height="2.5" fill="#264a6a"/><rect x="84" y="5.0" width="3" height="2.5" fill="#5cb2bf"/><rect x="87" y="5.0" width="3" height="2.5" fill="#31598a"/><rect x="90" y="5.0" width="3" height="2.5" fill="#264a6a"/><rect x="93" y="5.0" width="3" height="2.5" fill="#3a6a90"/><rect x="96" y="5.0" width="3" height="2.5" fill="#60b6c2"/><rect x="99" y="5.0" width="3" height="2.5" fill="#56aebb"/><rect x="102" y="5.0" width="3" height="2.5" fill="#5cb2bf"/><rect x="105" y="5.0" width="3" height="2.5" fill="#56aebb"/><rect x="108" y="5.0" width="3" height="2.5" fill="#469aa8"/><rect x="111" y="5.0" width="3" height="2.5" fill="#4a9cab"/><rect x="114" y="5.0" width="3" height="2.5" fill="#56aebb"/><rect x="117" y="5.0" width="3" height="2.5" fill="#56aebb"/><rect x="120" y="5.0" width="3" height="2.5" fill="#56aebb"/><rect x="123" y="5.0" width="3" height="2.5" fill="#5cb2bf"/><rect x="126" y="5.0" width="3" height="2.5" fill="#2a4e74"/><rect x="129" y="5.0" width="3" height="2.5" fill="#4a9cab"/><rect x="132" y="5.0" width="3" height="2.5" fill="#4fa6b4"/><rect x="135" y="5.0" width="3" height="2.5" fill="#264a6a"/><rect x="138" y="5.0" width="3" height="2.5" fill="#60b6c2"/><rect x="141" y="5.0" width="3" height="2.5" fill="#44809c"/><rect x="144" y="5.0" width="3" height="2.5" fill="#264a6a"/><rect x="147" y="5.0" width="3" height="2.5" fill="#60b6c2"/><rect x="150" y="5.0" width="3" height="2.5" fill="#5cb2bf"/><rect x="153" y="5.0" width="3" height="2.5" fill="#2a4e74"/><rect x="156" y="5.0" width="3" height="2.5" fill="#44809c"/><rect x="159" y="5.0" width="3" height="2.5" fill="#264a6a"/><rect x="162" y="5.0" width="3" height="2.5" fill="#264a6a"/><rect x="165" y="5.0" width="3" height="2.5" fill="#469aa8"/><rect x="168" y="5.0" width="3" height="2.5" fill="#31598a"/><rect x="171" y="5.0" width="3" height="2.5" fill="#5cb2bf"/><rect x="174" y="5.0" width="3" height="2.5" fill="#5cb2bf"/><rect x="177" y="5.0" width="3" height="2.5" fill="#56aebb"/><rect x="0" y="7.5" width="3" height="2.5" fill="#4fa6b4"/><rect x="3" y="7.5" width="3" height="2.5" fill="#4a9cab"/><rect x="6" y="7.5" width="3" height="2.5" fill="#31598a"/><rect x="9" y="7.5" width="3" height="2.5" fill="#52a9b6"/><rect x="12" y="7.5" width="3" height="2.5" fill="#2a4e74"/><rect x="15" y="7.5" width="3" height="2.5" fill="#52a9b6"/><rect x="18" y="7.5" width="3" height="2.5" fill="#4a9cab"/><rect x="21" y="7.5" width="3" height="2.5" fill="#52a9b6"/><rect x="24" y="7.5" width="3" height="2.5" fill="#3a6a90"/><rect x="27" y="7.5" width="3" height="2.5" fill="#2a4e74"/><rect x="30" y="7.5" width="3" height="2.5" fill="#469aa8"/><rect x="33" y="7.5" width="3" height="2.5" fill="#56aebb"/><rect x="36" y="7.5" width="3" height="2.5" fill="#264a6a"/><rect x="39" y="7.5" width="3" height="2.5" fill="#44809c"/><rect x="42" y="7.5" width="3" height="2.5" fill="#31598a"/><rect x="45" y="7.5" width="3" height="2.5" fill="#5cb2bf"/><rect x="48" y="7.5" width="3" height="2.5" fill="#60b6c2"/><rect x="51" y="7.5" width="3" height="2.5" fill="#60b6c2"/><rect x="54" y="7.5" width="3" height="2.5" fill="#52a9b6"/><rect x="57" y="7.5" width="3" height="2.5" fill="#56aebb"/><rect x="60" y="7.5" width="3" height="2.5" fill="#3a6a90"/><rect x="63" y="7.5" width="3" height="2.5" fill="#3a6a90"/><rect x="66" y="7.5" width="3" height="2.5" fill="#2a4e74"/><rect x="69" y="7.5" width="3" height="2.5" fill="#44809c"/><rect x="72" y="7.5" width="3" height="2.5" fill="#469aa8"/><rect x="75" y="7.5" width="3" height="2.5" fill="#4a9cab"/><rect x="78" y="7.5" width="3" height="2.5" fill="#31598a"/><rect x="81" y="7.5" width="3" height="2.5" fill="#2a4e74"/><rect x="84" y="7.5" width="3" height="2.5" fill="#3a6a90"/><rect x="87" y="7.5" width="3" height="2.5" fill="#4a9cab"/><rect x="90" y="7.5" width="3" height="2.5" fill="#264a6a"/><rect x="93" y="7.5" width="3" height="2.5" fill="#2a4e74"/><rect x="96" y="7.5" width="3" height="2.5" fill="#2a4e74"/><rect x="99" y="7.5" width="3" height="2.5" fill="#264a6a"/><rect x="102" y="7.5" width="3" height="2.5" fill="#469aa8"/><rect x="105" y="7.5" width="3" height="2.5" fill="#5cb2bf"/><rect x="108" y="7.5" width="3" height="2.5" fill="#60b6c2"/><rect x="111" y="7.5" width="3" height="2.5" fill="#4a9cab"/><rect x="114" y="7.5" width="3" height="2.5" fill="#5cb2bf"/><rect x="117" y="7.5" width="3" height="2.5" fill="#4fa6b4"/><rect x="120" y="7.5" width="3" height="2.5" fill="#56aebb"/><rect x="123" y="7.5" width="3" height="2.5" fill="#60b6c2"/><rect x="126" y="7.5" width="3" height="2.5" fill="#5cb2bf"/><rect x="129" y="7.5" width="3" height="2.5" fill="#56aebb"/><rect x="132" y="7.5" width="3" height="2.5" fill="#31598a"/><rect x="135" y="7.5" width="3" height="2.5" fill="#44809c"/><rect x="138" y="7.5" width="3" height="2.5" fill="#469aa8"/><rect x="141" y="7.5" width="3" height="2.5" fill="#52a9b6"/><rect x="144" y="7.5" width="3" height="2.5" fill="#3a6a90"/><rect x="147" y="7.5" width="3" height="2.5" fill="#2a4e74"/><rect x="150" y="7.5" width="3" height="2.5" fill="#5cb2bf"/><rect x="153" y="7.5" width="3" height="2.5" fill="#264a6a"/><rect x="156" y="7.5" width="3" height="2.5" fill="#469aa8"/><rect x="159" y="7.5" width="3" height="2.5" fill="#469aa8"/><rect x="162" y="7.5" width="3" height="2.5" fill="#44809c"/><rect x="165" y="7.5" width="3" height="2.5" fill="#3a6a90"/><rect x="168" y="7.5" width="3" height="2.5" fill="#60b6c2"/><rect x="171" y="7.5" width="3" height="2.5" fill="#469aa8"/><rect x="174" y="7.5" width="3" height="2.5" fill="#56aebb"/><rect x="177" y="7.5" width="3" height="2.5" fill="#4a9cab"/><rect x="0" y="10.0" width="3" height="2.5" fill="#60b6c2"/><rect x="3" y="10.0" width="3" height="2.5" fill="#44809c"/><rect x="6" y="10.0" width="3" height="2.5" fill="#44809c"/><rect x="9" y="10.0" width="3" height="2.5" fill="#3a6a90"/><rect x="12" y="10.0" width="3" height="2.5" fill="#44809c"/><rect x="15" y="10.0" width="3" height="2.5" fill="#3a6a90"/><rect x="18" y="10.0" width="3" height="2.5" fill="#2a4e74"/><rect x="21" y="10.0" width="3" height="2.5" fill="#3a6a90"/><rect x="24" y="10.0" width="3" height="2.5" fill="#44809c"/><rect x="27" y="10.0" width="3" height="2.5" fill="#2a4e74"/><rect x="30" y="10.0" width="3" height="2.5" fill="#4fa6b4"/><rect x="33" y="10.0" width="3" height="2.5" fill="#5cb2bf"/><rect x="36" y="10.0" width="3" height="2.5" fill="#3a6a90"/><rect x="39" y="10.0" width="3" height="2.5" fill="#3a6a90"/><rect x="42" y="10.0" width="3" height="2.5" fill="#264a6a"/><rect x="45" y="10.0" width="3" height="2.5" fill="#5cb2bf"/><rect x="48" y="10.0" width="3" height="2.5" fill="#60b6c2"/><rect x="51" y="10.0" width="3" height="2.5" fill="#5cb2bf"/><rect x="54" y="10.0" width="3" height="2.5" fill="#469aa8"/><rect x="57" y="10.0" width="3" height="2.5" fill="#4a9cab"/><rect x="60" y="10.0" width="3" height="2.5" fill="#3a6a90"/><rect x="63" y="10.0" width="3" height="2.5" fill="#4a9cab"/><rect x="66" y="10.0" width="3" height="2.5" fill="#2a4e74"/><rect x="69" y="10.0" width="3" height="2.5" fill="#31598a"/><rect x="72" y="10.0" width="3" height="2.5" fill="#264a6a"/><rect x="75" y="10.0" width="3" height="2.5" fill="#264a6a"/><rect x="78" y="10.0" width="3" height="2.5" fill="#3a6a90"/><rect x="81" y="10.0" width="3" height="2.5" fill="#44809c"/><rect x="84" y="10.0" width="3" height="2.5" fill="#44809c"/><rect x="87" y="10.0" width="3" height="2.5" fill="#52a9b6"/><rect x="90" y="10.0" width="3" height="2.5" fill="#44809c"/><rect x="93" y="10.0" width="3" height="2.5" fill="#4fa6b4"/><rect x="96" y="10.0" width="3" height="2.5" fill="#3a6a90"/><rect x="99" y="10.0" width="3" height="2.5" fill="#469aa8"/><rect x="102" y="10.0" width="3" height="2.5" fill="#56aebb"/><rect x="105" y="10.0" width="3" height="2.5" fill="#469aa8"/><rect x="108" y="10.0" width="3" height="2.5" fill="#56aebb"/><rect x="111" y="10.0" width="3" height="2.5" fill="#60b6c2"/><rect x="114" y="10.0" width="3" height="2.5" fill="#52a9b6"/><rect x="117" y="10.0" width="3" height="2.5" fill="#469aa8"/><rect x="120" y="10.0" width="3" height="2.5" fill="#52a9b6"/><rect x="123" y="10.0" width="3" height="2.5" fill="#56aebb"/><rect x="126" y="10.0" width="3" height="2.5" fill="#469aa8"/><rect x="129" y="10.0" width="3" height="2.5" fill="#56aebb"/><rect x="132" y="10.0" width="3" height="2.5" fill="#60b6c2"/><rect x="135" y="10.0" width="3" height="2.5" fill="#469aa8"/><rect x="138" y="10.0" width="3" height="2.5" fill="#469aa8"/><rect x="141" y="10.0" width="3" height="2.5" fill="#469aa8"/><rect x="144" y="10.0" width="3" height="2.5" fill="#60b6c2"/><rect x="147" y="10.0" width="3" height="2.5" fill="#56aebb"/><rect x="150" y="10.0" width="3" height="2.5" fill="#56aebb"/><rect x="153" y="10.0" width="3" height="2.5" fill="#52a9b6"/><rect x="156" y="10.0" width="3" height="2.5" fill="#52a9b6"/><rect x="159" y="10.0" width="3" height="2.5" fill="#60b6c2"/><rect x="162" y="10.0" width="3" height="2.5" fill="#4a9cab"/><rect x="165" y="10.0" width="3" height="2.5" fill="#56aebb"/><rect x="168" y="10.0" width="3" height="2.5" fill="#4a9cab"/><rect x="171" y="10.0" width="3" height="2.5" fill="#469aa8"/><rect x="174" y="10.0" width="3" height="2.5" fill="#4a9cab"/><rect x="177" y="10.0" width="3" height="2.5" fill="#56aebb"/><rect x="0" y="12.5" width="3" height="2.5" fill="#56aebb"/><rect x="3" y="12.5" width="3" height="2.5" fill="#56aebb"/><rect x="6" y="12.5" width="3" height="2.5" fill="#56aebb"/><rect x="9" y="12.5" width="3" height="2.5" fill="#56aebb"/><rect x="12" y="12.5" width="3" height="2.5" fill="#4a9cab"/><rect x="15" y="12.5" width="3" height="2.5" fill="#3a6a90"/><rect x="18" y="12.5" width="3" height="2.5" fill="#5cb2bf"/><rect x="21" y="12.5" width="3" height="2.5" fill="#31598a"/><rect x="24" y="12.5" width="3" height="2.5" fill="#2a4e74"/><rect x="27" y="12.5" width="3" height="2.5" fill="#44809c"/><rect x="30" y="12.5" width="3" height="2.5" fill="#60b6c2"/><rect x="33" y="12.5" width="3" height="2.5" fill="#4fa6b4"/><rect x="36" y="12.5" width="3" height="2.5" fill="#52a9b6"/><rect x="39" y="12.5" width="3" height="2.5" fill="#469aa8"/><rect x="42" y="12.5" width="3" height="2.5" fill="#60b6c2"/><rect x="45" y="12.5" width="3" height="2.5" fill="#56aebb"/><rect x="48" y="12.5" width="3" height="2.5" fill="#60b6c2"/><rect x="51" y="12.5" width="3" height="2.5" fill="#4fa6b4"/><rect x="54" y="12.5" width="3" height="2.5" fill="#5cb2bf"/><rect x="57" y="12.5" width="3" height="2.5" fill="#4fa6b4"/><rect x="60" y="12.5" width="3" height="2.5" fill="#4fa6b4"/><rect x="63" y="12.5" width="3" height="2.5" fill="#4fa6b4"/><rect x="66" y="12.5" width="3" height="2.5" fill="#60b6c2"/><rect x="69" y="12.5" width="3" height="2.5" fill="#469aa8"/><rect x="72" y="12.5" width="3" height="2.5" fill="#469aa8"/><rect x="75" y="12.5" width="3" height="2.5" fill="#469aa8"/><rect x="78" y="12.5" width="3" height="2.5" fill="#469aa8"/><rect x="81" y="12.5" width="3" height="2.5" fill="#5cb2bf"/><rect x="84" y="12.5" width="3" height="2.5" fill="#56aebb"/><rect x="87" y="12.5" width="3" height="2.5" fill="#56aebb"/><rect x="90" y="12.5" width="3" height="2.5" fill="#56aebb"/><rect x="93" y="12.5" width="3" height="2.5" fill="#4fa6b4"/><rect x="96" y="12.5" width="3" height="2.5" fill="#56aebb"/><rect x="99" y="12.5" width="3" height="2.5" fill="#56aebb"/><rect x="102" y="12.5" width="3" height="2.5" fill="#60b6c2"/><rect x="105" y="12.5" width="3" height="2.5" fill="#56aebb"/><rect x="108" y="12.5" width="3" height="2.5" fill="#4a9cab"/><rect x="111" y="12.5" width="3" height="2.5" fill="#52a9b6"/><rect x="114" y="12.5" width="3" height="2.5" fill="#4fa6b4"/><rect x="117" y="12.5" width="3" height="2.5" fill="#469aa8"/><rect x="120" y="12.5" width="3" height="2.5" fill="#4fa6b4"/><rect x="123" y="12.5" width="3" height="2.5" fill="#56aebb"/><rect x="126" y="12.5" width="3" height="2.5" fill="#52a9b6"/><rect x="129" y="12.5" width="3" height="2.5" fill="#5cb2bf"/><rect x="132" y="12.5" width="3" height="2.5" fill="#4fa6b4"/><rect x="135" y="12.5" width="3" height="2.5" fill="#60b6c2"/><rect x="138" y="12.5" width="3" height="2.5" fill="#4fa6b4"/><rect x="141" y="12.5" width="3" height="2.5" fill="#4a9cab"/><rect x="144" y="12.5" width="3" height="2.5" fill="#5cb2bf"/><rect x="147" y="12.5" width="3" height="2.5" fill="#5cb2bf"/><rect x="150" y="12.5" width="3" height="2.5" fill="#5cb2bf"/><rect x="153" y="12.5" width="3" height="2.5" fill="#469aa8"/><rect x="156" y="12.5" width="3" height="2.5" fill="#4a9cab"/><rect x="159" y="12.5" width="3" height="2.5" fill="#5cb2bf"/><rect x="162" y="12.5" width="3" height="2.5" fill="#56aebb"/><rect x="165" y="12.5" width="3" height="2.5" fill="#469aa8"/><rect x="168" y="12.5" width="3" height="2.5" fill="#4a9cab"/><rect x="171" y="12.5" width="3" height="2.5" fill="#4fa6b4"/><rect x="174" y="12.5" width="3" height="2.5" fill="#52a9b6"/><rect x="177" y="12.5" width="3" height="2.5" fill="#52a9b6"/><rect x="0" y="15.0" width="3" height="2.5" fill="#4fa6b4"/><rect x="3" y="15.0" width="3" height="2.5" fill="#60b6c2"/><rect x="6" y="15.0" width="3" height="2.5" fill="#56aebb"/><rect x="9" y="15.0" width="3" height="2.5" fill="#56aebb"/><rect x="12" y="15.0" width="3" height="2.5" fill="#5cb2bf"/><rect x="15" y="15.0" width="3" height="2.5" fill="#5cb2bf"/><rect x="18" y="15.0" width="3" height="2.5" fill="#4a9cab"/><rect x="21" y="15.0" width="3" height="2.5" fill="#52a9b6"/><rect x="24" y="15.0" width="3" height="2.5" fill="#4a9cab"/><rect x="27" y="15.0" width="3" height="2.5" fill="#5cb2bf"/><rect x="30" y="15.0" width="3" height="2.5" fill="#56aebb"/><rect x="33" y="15.0" width="3" height="2.5" fill="#469aa8"/><rect x="36" y="15.0" width="3" height="2.5" fill="#56aebb"/><rect x="39" y="15.0" width="3" height="2.5" fill="#4fa6b4"/><rect x="42" y="15.0" width="3" height="2.5" fill="#469aa8"/><rect x="45" y="15.0" width="3" height="2.5" fill="#60b6c2"/><rect x="48" y="15.0" width="3" height="2.5" fill="#4fa6b4"/><rect x="51" y="15.0" width="3" height="2.5" fill="#4a9cab"/><rect x="54" y="15.0" width="3" height="2.5" fill="#4fa6b4"/><rect x="57" y="15.0" width="3" height="2.5" fill="#60b6c2"/><rect x="60" y="15.0" width="3" height="2.5" fill="#60b6c2"/><rect x="63" y="15.0" width="3" height="2.5" fill="#52a9b6"/><rect x="66" y="15.0" width="3" height="2.5" fill="#60b6c2"/><rect x="69" y="15.0" width="3" height="2.5" fill="#52a9b6"/><rect x="72" y="15.0" width="3" height="2.5" fill="#5cb2bf"/><rect x="75" y="15.0" width="3" height="2.5" fill="#469aa8"/><rect x="78" y="15.0" width="3" height="2.5" fill="#469aa8"/><rect x="81" y="15.0" width="3" height="2.5" fill="#56aebb"/><rect x="84" y="15.0" width="3" height="2.5" fill="#469aa8"/><rect x="87" y="15.0" width="3" height="2.5" fill="#469aa8"/><rect x="90" y="15.0" width="3" height="2.5" fill="#4a9cab"/><rect x="93" y="15.0" width="3" height="2.5" fill="#60b6c2"/><rect x="96" y="15.0" width="3" height="2.5" fill="#60b6c2"/><rect x="99" y="15.0" width="3" height="2.5" fill="#4a9cab"/><rect x="102" y="15.0" width="3" height="2.5" fill="#4a9cab"/><rect x="105" y="15.0" width="3" height="2.5" fill="#4fa6b4"/><rect x="108" y="15.0" width="3" height="2.5" fill="#52a9b6"/><rect x="111" y="15.0" width="3" height="2.5" fill="#52a9b6"/><rect x="114" y="15.0" width="3" height="2.5" fill="#60b6c2"/><rect x="117" y="15.0" width="3" height="2.5" fill="#56aebb"/><rect x="120" y="15.0" width="3" height="2.5" fill="#60b6c2"/><rect x="123" y="15.0" width="3" height="2.5" fill="#5cb2bf"/><rect x="126" y="15.0" width="3" height="2.5" fill="#56aebb"/><rect x="129" y="15.0" width="3" height="2.5" fill="#4a9cab"/><rect x="132" y="15.0" width="3" height="2.5" fill="#469aa8"/><rect x="135" y="15.0" width="3" height="2.5" fill="#52a9b6"/><rect x="138" y="15.0" width="3" height="2.5" fill="#4a9cab"/><rect x="141" y="15.0" width="3" height="2.5" fill="#60b6c2"/><rect x="144" y="15.0" width="3" height="2.5" fill="#5cb2bf"/><rect x="147" y="15.0" width="3" height="2.5" fill="#60b6c2"/><rect x="150" y="15.0" width="3" height="2.5" fill="#56aebb"/><rect x="153" y="15.0" width="3" height="2.5" fill="#5cb2bf"/><rect x="156" y="15.0" width="3" height="2.5" fill="#56aebb"/><rect x="159" y="15.0" width="3" height="2.5" fill="#52a9b6"/><rect x="162" y="15.0" width="3" height="2.5" fill="#56aebb"/><rect x="165" y="15.0" width="3" height="2.5" fill="#4fa6b4"/><rect x="168" y="15.0" width="3" height="2.5" fill="#60b6c2"/><rect x="171" y="15.0" width="3" height="2.5" fill="#4a9cab"/><rect x="174" y="15.0" width="3" height="2.5" fill="#4a9cab"/><rect x="177" y="15.0" width="3" height="2.5" fill="#5cb2bf"/><rect x="0" y="17.5" width="3" height="2.5" fill="#4fa6b4"/><rect x="3" y="17.5" width="3" height="2.5" fill="#4fa6b4"/><rect x="6" y="17.5" width="3" height="2.5" fill="#4a9cab"/><rect x="9" y="17.5" width="3" height="2.5" fill="#52a9b6"/><rect x="12" y="17.5" width="3" height="2.5" fill="#469aa8"/><rect x="15" y="17.5" width="3" height="2.5" fill="#4fa6b4"/><rect x="18" y="17.5" width="3" height="2.5" fill="#56aebb"/><rect x="21" y="17.5" width="3" height="2.5" fill="#4a9cab"/><rect x="24" y="17.5" width="3" height="2.5" fill="#52a9b6"/><rect x="27" y="17.5" width="3" height="2.5" fill="#4a9cab"/><rect x="30" y="17.5" width="3" height="2.5" fill="#4a9cab"/><rect x="33" y="17.5" width="3" height="2.5" fill="#56aebb"/><rect x="36" y="17.5" width="3" height="2.5" fill="#52a9b6"/><rect x="39" y="17.5" width="3" height="2.5" fill="#5cb2bf"/><rect x="42" y="17.5" width="3" height="2.5" fill="#469aa8"/><rect x="45" y="17.5" width="3" height="2.5" fill="#56aebb"/><rect x="48" y="17.5" width="3" height="2.5" fill="#469aa8"/><rect x="51" y="17.5" width="3" height="2.5" fill="#4fa6b4"/><rect x="54" y="17.5" width="3" height="2.5" fill="#5cb2bf"/><rect x="57" y="17.5" width="3" height="2.5" fill="#469aa8"/><rect x="60" y="17.5" width="3" height="2.5" fill="#5cb2bf"/><rect x="63" y="17.5" width="3" height="2.5" fill="#52a9b6"/><rect x="66" y="17.5" width="3" height="2.5" fill="#56aebb"/><rect x="69" y="17.5" width="3" height="2.5" fill="#52a9b6"/><rect x="72" y="17.5" width="3" height="2.5" fill="#4fa6b4"/><rect x="75" y="17.5" width="3" height="2.5" fill="#60b6c2"/><rect x="78" y="17.5" width="3" height="2.5" fill="#5cb2bf"/><rect x="81" y="17.5" width="3" height="2.5" fill="#469aa8"/><rect x="84" y="17.5" width="3" height="2.5" fill="#4fa6b4"/><rect x="87" y="17.5" width="3" height="2.5" fill="#4fa6b4"/><rect x="90" y="17.5" width="3" height="2.5" fill="#469aa8"/><rect x="93" y="17.5" width="3" height="2.5" fill="#4fa6b4"/><rect x="96" y="17.5" width="3" height="2.5" fill="#52a9b6"/><rect x="99" y="17.5" width="3" height="2.5" fill="#56aebb"/><rect x="102" y="17.5" width="3" height="2.5" fill="#4a9cab"/><rect x="105" y="17.5" width="3" height="2.5" fill="#5cb2bf"/><rect x="108" y="17.5" width="3" height="2.5" fill="#5cb2bf"/><rect x="111" y="17.5" width="3" height="2.5" fill="#469aa8"/><rect x="114" y="17.5" width="3" height="2.5" fill="#4fa6b4"/><rect x="117" y="17.5" width="3" height="2.5" fill="#60b6c2"/><rect x="120" y="17.5" width="3" height="2.5" fill="#56aebb"/><rect x="123" y="17.5" width="3" height="2.5" fill="#52a9b6"/><rect x="126" y="17.5" width="3" height="2.5" fill="#5cb2bf"/><rect x="129" y="17.5" width="3" height="2.5" fill="#4fa6b4"/><rect x="132" y="17.5" width="3" height="2.5" fill="#4fa6b4"/><rect x="135" y="17.5" width="3" height="2.5" fill="#4a9cab"/><rect x="138" y="17.5" width="3" height="2.5" fill="#4a9cab"/><rect x="141" y="17.5" width="3" height="2.5" fill="#4a9cab"/><rect x="144" y="17.5" width="3" height="2.5" fill="#4a9cab"/><rect x="147" y="17.5" width="3" height="2.5" fill="#469aa8"/><rect x="150" y="17.5" width="3" height="2.5" fill="#469aa8"/><rect x="153" y="17.5" width="3" height="2.5" fill="#469aa8"/><rect x="156" y="17.5" width="3" height="2.5" fill="#5cb2bf"/><rect x="159" y="17.5" width="3" height="2.5" fill="#469aa8"/><rect x="162" y="17.5" width="3" height="2.5" fill="#469aa8"/><rect x="165" y="17.5" width="3" height="2.5" fill="#60b6c2"/><rect x="168" y="17.5" width="3" height="2.5" fill="#4fa6b4"/><rect x="171" y="17.5" width="3" height="2.5" fill="#52a9b6"/><rect x="174" y="17.5" width="3" height="2.5" fill="#5cb2bf"/><rect x="177" y="17.5" width="3" height="2.5" fill="#60b6c2"/><rect x="0" y="20.0" width="3" height="2.5" fill="#52a9b6"/><rect x="3" y="20.0" width="3" height="2.5" fill="#4fa6b4"/><rect x="6" y="20.0" width="3" height="2.5" fill="#469aa8"/><rect x="9" y="20.0" width="3" height="2.5" fill="#469aa8"/><rect x="12" y="20.0" width="3" height="2.5" fill="#52a9b6"/><rect x="15" y="20.0" width="3" height="2.5" fill="#60b6c2"/><rect x="18" y="20.0" width="3" height="2.5" fill="#4fa6b4"/><rect x="21" y="20.0" width="3" height="2.5" fill="#5cb2bf"/><rect x="24" y="20.0" width="3" height="2.5" fill="#56aebb"/><rect x="27" y="20.0" width="3" height="2.5" fill="#5cb2bf"/><rect x="30" y="20.0" width="3" height="2.5" fill="#5cb2bf"/><rect x="33" y="20.0" width="3" height="2.5" fill="#56aebb"/><rect x="36" y="20.0" width="3" height="2.5" fill="#60b6c2"/><rect x="39" y="20.0" width="3" height="2.5" fill="#5cb2bf"/><rect x="42" y="20.0" width="3" height="2.5" fill="#469aa8"/><rect x="45" y="20.0" width="3" height="2.5" fill="#469aa8"/><rect x="48" y="20.0" width="3" height="2.5" fill="#469aa8"/><rect x="51" y="20.0" width="3" height="2.5" fill="#4fa6b4"/><rect x="54" y="20.0" width="3" height="2.5" fill="#5cb2bf"/><rect x="57" y="20.0" width="3" height="2.5" fill="#5cb2bf"/><rect x="60" y="20.0" width="3" height="2.5" fill="#5cb2bf"/><rect x="63" y="20.0" width="3" height="2.5" fill="#4a9cab"/><rect x="66" y="20.0" width="3" height="2.5" fill="#469aa8"/><rect x="69" y="20.0" width="3" height="2.5" fill="#5cb2bf"/><rect x="72" y="20.0" width="3" height="2.5" fill="#469aa8"/><rect x="75" y="20.0" width="3" height="2.5" fill="#4a9cab"/><rect x="78" y="20.0" width="3" height="2.5" fill="#4a9cab"/><rect x="81" y="20.0" width="3" height="2.5" fill="#469aa8"/><rect x="84" y="20.0" width="3" height="2.5" fill="#4a9cab"/><rect x="87" y="20.0" width="3" height="2.5" fill="#5cb2bf"/><rect x="90" y="20.0" width="3" height="2.5" fill="#52a9b6"/><rect x="93" y="20.0" width="3" height="2.5" fill="#4a9cab"/><rect x="96" y="20.0" width="3" height="2.5" fill="#469aa8"/><rect x="99" y="20.0" width="3" height="2.5" fill="#4a9cab"/><rect x="102" y="20.0" width="3" height="2.5" fill="#52a9b6"/><rect x="105" y="20.0" width="3" height="2.5" fill="#52a9b6"/><rect x="108" y="20.0" width="3" height="2.5" fill="#52a9b6"/><rect x="111" y="20.0" width="3" height="2.5" fill="#4a9cab"/><rect x="114" y="20.0" width="3" height="2.5" fill="#4fa6b4"/><rect x="117" y="20.0" width="3" height="2.5" fill="#4fa6b4"/><rect x="120" y="20.0" width="3" height="2.5" fill="#60b6c2"/><rect x="123" y="20.0" width="3" height="2.5" fill="#56aebb"/><rect x="126" y="20.0" width="3" height="2.5" fill="#469aa8"/><rect x="129" y="20.0" width="3" height="2.5" fill="#4fa6b4"/><rect x="132" y="20.0" width="3" height="2.5" fill="#52a9b6"/><rect x="135" y="20.0" width="3" height="2.5" fill="#56aebb"/><rect x="138" y="20.0" width="3" height="2.5" fill="#5cb2bf"/><rect x="141" y="20.0" width="3" height="2.5" fill="#60b6c2"/><rect x="144" y="20.0" width="3" height="2.5" fill="#52a9b6"/><rect x="147" y="20.0" width="3" height="2.5" fill="#5cb2bf"/><rect x="150" y="20.0" width="3" height="2.5" fill="#4fa6b4"/><rect x="153" y="20.0" width="3" height="2.5" fill="#4a9cab"/><rect x="156" y="20.0" width="3" height="2.5" fill="#52a9b6"/><rect x="159" y="20.0" width="3" height="2.5" fill="#5cb2bf"/><rect x="162" y="20.0" width="3" height="2.5" fill="#4fa6b4"/><rect x="165" y="20.0" width="3" height="2.5" fill="#469aa8"/><rect x="168" y="20.0" width="3" height="2.5" fill="#52a9b6"/><rect x="171" y="20.0" width="3" height="2.5" fill="#4a9cab"/><rect x="174" y="20.0" width="3" height="2.5" fill="#4fa6b4"/><rect x="177" y="20.0" width="3" height="2.5" fill="#60b6c2"/><rect x="0" y="22.5" width="3" height="2.5" fill="#56aebb"/><rect x="3" y="22.5" width="3" height="2.5" fill="#5cb2bf"/><rect x="6" y="22.5" width="3" height="2.5" fill="#52a9b6"/><rect x="9" y="22.5" width="3" height="2.5" fill="#5cb2bf"/><rect x="12" y="22.5" width="3" height="2.5" fill="#4a9cab"/><rect x="15" y="22.5" width="3" height="2.5" fill="#60b6c2"/><rect x="18" y="22.5" width="3" height="2.5" fill="#56aebb"/><rect x="21" y="22.5" width="3" height="2.5" fill="#4fa6b4"/><rect x="24" y="22.5" width="3" height="2.5" fill="#469aa8"/><rect x="27" y="22.5" width="3" height="2.5" fill="#4fa6b4"/><rect x="30" y="22.5" width="3" height="2.5" fill="#60b6c2"/><rect x="33" y="22.5" width="3" height="2.5" fill="#52a9b6"/><rect x="36" y="22.5" width="3" height="2.5" fill="#5cb2bf"/><rect x="39" y="22.5" width="3" height="2.5" fill="#56aebb"/><rect x="42" y="22.5" width="3" height="2.5" fill="#60b6c2"/><rect x="45" y="22.5" width="3" height="2.5" fill="#56aebb"/><rect x="48" y="22.5" width="3" height="2.5" fill="#469aa8"/><rect x="51" y="22.5" width="3" height="2.5" fill="#52a9b6"/><rect x="54" y="22.5" width="3" height="2.5" fill="#4fa6b4"/><rect x="57" y="22.5" width="3" height="2.5" fill="#4fa6b4"/><rect x="60" y="22.5" width="3" height="2.5" fill="#469aa8"/><rect x="63" y="22.5" width="3" height="2.5" fill="#5cb2bf"/><rect x="66" y="22.5" width="3" height="2.5" fill="#5cb2bf"/><rect x="69" y="22.5" width="3" height="2.5" fill="#4fa6b4"/><rect x="72" y="22.5" width="3" height="2.5" fill="#56aebb"/><rect x="75" y="22.5" width="3" height="2.5" fill="#60b6c2"/><rect x="78" y="22.5" width="3" height="2.5" fill="#4fa6b4"/><rect x="81" y="22.5" width="3" height="2.5" fill="#4a9cab"/><rect x="84" y="22.5" width="3" height="2.5" fill="#469aa8"/><rect x="87" y="22.5" width="3" height="2.5" fill="#56aebb"/><rect x="90" y="22.5" width="3" height="2.5" fill="#4fa6b4"/><rect x="93" y="22.5" width="3" height="2.5" fill="#4a9cab"/><rect x="96" y="22.5" width="3" height="2.5" fill="#5cb2bf"/><rect x="99" y="22.5" width="3" height="2.5" fill="#56aebb"/><rect x="102" y="22.5" width="3" height="2.5" fill="#52a9b6"/><rect x="105" y="22.5" width="3" height="2.5" fill="#5cb2bf"/><rect x="108" y="22.5" width="3" height="2.5" fill="#5cb2bf"/><rect x="111" y="22.5" width="3" height="2.5" fill="#469aa8"/><rect x="114" y="22.5" width="3" height="2.5" fill="#4a9cab"/><rect x="117" y="22.5" width="3" height="2.5" fill="#52a9b6"/><rect x="120" y="22.5" width="3" height="2.5" fill="#469aa8"/><rect x="123" y="22.5" width="3" height="2.5" fill="#52a9b6"/><rect x="126" y="22.5" width="3" height="2.5" fill="#5cb2bf"/><rect x="129" y="22.5" width="3" height="2.5" fill="#4a9cab"/><rect x="132" y="22.5" width="3" height="2.5" fill="#60b6c2"/><rect x="135" y="22.5" width="3" height="2.5" fill="#52a9b6"/><rect x="138" y="22.5" width="3" height="2.5" fill="#469aa8"/><rect x="141" y="22.5" width="3" height="2.5" fill="#60b6c2"/><rect x="144" y="22.5" width="3" height="2.5" fill="#56aebb"/><rect x="147" y="22.5" width="3" height="2.5" fill="#4a9cab"/><rect x="150" y="22.5" width="3" height="2.5" fill="#52a9b6"/><rect x="153" y="22.5" width="3" height="2.5" fill="#56aebb"/><rect x="156" y="22.5" width="3" height="2.5" fill="#56aebb"/><rect x="159" y="22.5" width="3" height="2.5" fill="#5cb2bf"/><rect x="162" y="22.5" width="3" height="2.5" fill="#4fa6b4"/><rect x="165" y="22.5" width="3" height="2.5" fill="#469aa8"/><rect x="168" y="22.5" width="3" height="2.5" fill="#4a9cab"/><rect x="171" y="22.5" width="3" height="2.5" fill="#60b6c2"/><rect x="174" y="22.5" width="3" height="2.5" fill="#469aa8"/><rect x="177" y="22.5" width="3" height="2.5" fill="#469aa8"/><rect x="0" y="25.0" width="3" height="2.5" fill="#60b6c2"/><rect x="3" y="25.0" width="3" height="2.5" fill="#4a9cab"/><rect x="6" y="25.0" width="3" height="2.5" fill="#4a9cab"/><rect x="9" y="25.0" width="3" height="2.5" fill="#4a9cab"/><rect x="12" y="25.0" width="3" height="2.5" fill="#469aa8"/><rect x="15" y="25.0" width="3" height="2.5" fill="#52a9b6"/><rect x="18" y="25.0" width="3" height="2.5" fill="#52a9b6"/><rect x="21" y="25.0" width="3" height="2.5" fill="#469aa8"/><rect x="24" y="25.0" width="3" height="2.5" fill="#52a9b6"/><rect x="27" y="25.0" width="3" height="2.5" fill="#469aa8"/><rect x="30" y="25.0" width="3" height="2.5" fill="#56aebb"/><rect x="33" y="25.0" width="3" height="2.5" fill="#52a9b6"/><rect x="36" y="25.0" width="3" height="2.5" fill="#4a9cab"/><rect x="39" y="25.0" width="3" height="2.5" fill="#60b6c2"/><rect x="42" y="25.0" width="3" height="2.5" fill="#56aebb"/><rect x="45" y="25.0" width="3" height="2.5" fill="#56aebb"/><rect x="48" y="25.0" width="3" height="2.5" fill="#56aebb"/><rect x="51" y="25.0" width="3" height="2.5" fill="#469aa8"/><rect x="54" y="25.0" width="3" height="2.5" fill="#52a9b6"/><rect x="57" y="25.0" width="3" height="2.5" fill="#56aebb"/><rect x="60" y="25.0" width="3" height="2.5" fill="#52a9b6"/><rect x="63" y="25.0" width="3" height="2.5" fill="#4fa6b4"/><rect x="66" y="25.0" width="3" height="2.5" fill="#52a9b6"/><rect x="69" y="25.0" width="3" height="2.5" fill="#4fa6b4"/><rect x="72" y="25.0" width="3" height="2.5" fill="#4fa6b4"/><rect x="75" y="25.0" width="3" height="2.5" fill="#4a9cab"/><rect x="78" y="25.0" width="3" height="2.5" fill="#4a9cab"/><rect x="81" y="25.0" width="3" height="2.5" fill="#5cb2bf"/><rect x="84" y="25.0" width="3" height="2.5" fill="#4fa6b4"/><rect x="87" y="25.0" width="3" height="2.5" fill="#469aa8"/><rect x="90" y="25.0" width="3" height="2.5" fill="#4fa6b4"/><rect x="93" y="25.0" width="3" height="2.5" fill="#4fa6b4"/><rect x="96" y="25.0" width="3" height="2.5" fill="#56aebb"/><rect x="99" y="25.0" width="3" height="2.5" fill="#469aa8"/><rect x="102" y="25.0" width="3" height="2.5" fill="#4a9cab"/><rect x="105" y="25.0" width="3" height="2.5" fill="#4fa6b4"/><rect x="108" y="25.0" width="3" height="2.5" fill="#60b6c2"/><rect x="111" y="25.0" width="3" height="2.5" fill="#4fa6b4"/><rect x="114" y="25.0" width="3" height="2.5" fill="#52a9b6"/><rect x="117" y="25.0" width="3" height="2.5" fill="#56aebb"/><rect x="120" y="25.0" width="3" height="2.5" fill="#469aa8"/><rect x="123" y="25.0" width="3" height="2.5" fill="#56aebb"/><rect x="126" y="25.0" width="3" height="2.5" fill="#52a9b6"/><rect x="129" y="25.0" width="3" height="2.5" fill="#4a9cab"/><rect x="132" y="25.0" width="3" height="2.5" fill="#5cb2bf"/><rect x="135" y="25.0" width="3" height="2.5" fill="#5cb2bf"/><rect x="138" y="25.0" width="3" height="2.5" fill="#4a9cab"/><rect x="141" y="25.0" width="3" height="2.5" fill="#56aebb"/><rect x="144" y="25.0" width="3" height="2.5" fill="#4a9cab"/><rect x="147" y="25.0" width="3" height="2.5" fill="#4a9cab"/><rect x="150" y="25.0" width="3" height="2.5" fill="#5cb2bf"/><rect x="153" y="25.0" width="3" height="2.5" fill="#52a9b6"/><rect x="156" y="25.0" width="3" height="2.5" fill="#56aebb"/><rect x="159" y="25.0" width="3" height="2.5" fill="#60b6c2"/><rect x="162" y="25.0" width="3" height="2.5" fill="#60b6c2"/><rect x="165" y="25.0" width="3" height="2.5" fill="#4fa6b4"/><rect x="168" y="25.0" width="3" height="2.5" fill="#60b6c2"/><rect x="171" y="25.0" width="3" height="2.5" fill="#4fa6b4"/><rect x="174" y="25.0" width="3" height="2.5" fill="#5cb2bf"/><rect x="177" y="25.0" width="3" height="2.5" fill="#60b6c2"/><rect x="0" y="27.5" width="3" height="2.5" fill="#60b6c2"/><rect x="3" y="27.5" width="3" height="2.5" fill="#469aa8"/><rect x="6" y="27.5" width="3" height="2.5" fill="#60b6c2"/><rect x="9" y="27.5" width="3" height="2.5" fill="#60b6c2"/><rect x="12" y="27.5" width="3" height="2.5" fill="#60b6c2"/><rect x="15" y="27.5" width="3" height="2.5" fill="#56aebb"/><rect x="18" y="27.5" width="3" height="2.5" fill="#5cb2bf"/><rect x="21" y="27.5" width="3" height="2.5" fill="#5cb2bf"/><rect x="24" y="27.5" width="3" height="2.5" fill="#52a9b6"/><rect x="27" y="27.5" width="3" height="2.5" fill="#4a9cab"/><rect x="30" y="27.5" width="3" height="2.5" fill="#5cb2bf"/><rect x="33" y="27.5" width="3" height="2.5" fill="#60b6c2"/><rect x="36" y="27.5" width="3" height="2.5" fill="#56aebb"/><rect x="39" y="27.5" width="3" height="2.5" fill="#4a9cab"/><rect x="42" y="27.5" width="3" height="2.5" fill="#56aebb"/><rect x="45" y="27.5" width="3" height="2.5" fill="#52a9b6"/><rect x="48" y="27.5" width="3" height="2.5" fill="#60b6c2"/><rect x="51" y="27.5" width="3" height="2.5" fill="#469aa8"/><rect x="54" y="27.5" width="3" height="2.5" fill="#4a9cab"/><rect x="57" y="27.5" width="3" height="2.5" fill="#4a9cab"/><rect x="60" y="27.5" width="3" height="2.5" fill="#469aa8"/><rect x="63" y="27.5" width="3" height="2.5" fill="#60b6c2"/><rect x="66" y="27.5" width="3" height="2.5" fill="#52a9b6"/><rect x="69" y="27.5" width="3" height="2.5" fill="#60b6c2"/><rect x="72" y="27.5" width="3" height="2.5" fill="#56aebb"/><rect x="75" y="27.5" width="3" height="2.5" fill="#5cb2bf"/><rect x="78" y="27.5" width="3" height="2.5" fill="#52a9b6"/><rect x="81" y="27.5" width="3" height="2.5" fill="#4a9cab"/><rect x="84" y="27.5" width="3" height="2.5" fill="#469aa8"/><rect x="87" y="27.5" width="3" height="2.5" fill="#4fa6b4"/><rect x="90" y="27.5" width="3" height="2.5" fill="#5cb2bf"/><rect x="93" y="27.5" width="3" height="2.5" fill="#4a9cab"/><rect x="96" y="27.5" width="3" height="2.5" fill="#4fa6b4"/><rect x="99" y="27.5" width="3" height="2.5" fill="#469aa8"/><rect x="102" y="27.5" width="3" height="2.5" fill="#4fa6b4"/><rect x="105" y="27.5" width="3" height="2.5" fill="#5cb2bf"/><rect x="108" y="27.5" width="3" height="2.5" fill="#469aa8"/><rect x="111" y="27.5" width="3" height="2.5" fill="#469aa8"/><rect x="114" y="27.5" width="3" height="2.5" fill="#5cb2bf"/><rect x="117" y="27.5" width="3" height="2.5" fill="#60b6c2"/><rect x="120" y="27.5" width="3" height="2.5" fill="#52a9b6"/><rect x="123" y="27.5" width="3" height="2.5" fill="#5cb2bf"/><rect x="126" y="27.5" width="3" height="2.5" fill="#4a9cab"/><rect x="129" y="27.5" width="3" height="2.5" fill="#60b6c2"/><rect x="132" y="27.5" width="3" height="2.5" fill="#60b6c2"/><rect x="135" y="27.5" width="3" height="2.5" fill="#4fa6b4"/><rect x="138" y="27.5" width="3" height="2.5" fill="#4fa6b4"/><rect x="141" y="27.5" width="3" height="2.5" fill="#4a9cab"/><rect x="144" y="27.5" width="3" height="2.5" fill="#56aebb"/><rect x="147" y="27.5" width="3" height="2.5" fill="#52a9b6"/><rect x="150" y="27.5" width="3" height="2.5" fill="#469aa8"/><rect x="153" y="27.5" width="3" height="2.5" fill="#4fa6b4"/><rect x="156" y="27.5" width="3" height="2.5" fill="#52a9b6"/><rect x="159" y="27.5" width="3" height="2.5" fill="#4a9cab"/><rect x="162" y="27.5" width="3" height="2.5" fill="#5cb2bf"/><rect x="165" y="27.5" width="3" height="2.5" fill="#52a9b6"/><rect x="168" y="27.5" width="3" height="2.5" fill="#60b6c2"/><rect x="171" y="27.5" width="3" height="2.5" fill="#52a9b6"/><rect x="174" y="27.5" width="3" height="2.5" fill="#4a9cab"/><rect x="177" y="27.5" width="3" height="2.5" fill="#4a9cab"/><rect x="0" y="30.0" width="3" height="2.5" fill="#56aebb"/><rect x="3" y="30.0" width="3" height="2.5" fill="#56aebb"/><rect x="6" y="30.0" width="3" height="2.5" fill="#4a9cab"/><rect x="9" y="30.0" width="3" height="2.5" fill="#52a9b6"/><rect x="12" y="30.0" width="3" height="2.5" fill="#52a9b6"/><rect x="15" y="30.0" width="3" height="2.5" fill="#4a9cab"/><rect x="18" y="30.0" width="3" height="2.5" fill="#4a9cab"/><rect x="21" y="30.0" width="3" height="2.5" fill="#4fa6b4"/><rect x="24" y="30.0" width="3" height="2.5" fill="#4a9cab"/><rect x="27" y="30.0" width="3" height="2.5" fill="#52a9b6"/><rect x="30" y="30.0" width="3" height="2.5" fill="#5cb2bf"/><rect x="33" y="30.0" width="3" height="2.5" fill="#469aa8"/><rect x="36" y="30.0" width="3" height="2.5" fill="#469aa8"/><rect x="39" y="30.0" width="3" height="2.5" fill="#52a9b6"/><rect x="42" y="30.0" width="3" height="2.5" fill="#4a9cab"/><rect x="45" y="30.0" width="3" height="2.5" fill="#5cb2bf"/><rect x="48" y="30.0" width="3" height="2.5" fill="#469aa8"/><rect x="51" y="30.0" width="3" height="2.5" fill="#60b6c2"/><rect x="54" y="30.0" width="3" height="2.5" fill="#4a9cab"/><rect x="57" y="30.0" width="3" height="2.5" fill="#5cb2bf"/><rect x="60" y="30.0" width="3" height="2.5" fill="#4a9cab"/><rect x="63" y="30.0" width="3" height="2.5" fill="#56aebb"/><rect x="66" y="30.0" width="3" height="2.5" fill="#5cb2bf"/><rect x="69" y="30.0" width="3" height="2.5" fill="#52a9b6"/><rect x="72" y="30.0" width="3" height="2.5" fill="#469aa8"/><rect x="75" y="30.0" width="3" height="2.5" fill="#56aebb"/><rect x="78" y="30.0" width="3" height="2.5" fill="#4fa6b4"/><rect x="81" y="30.0" width="3" height="2.5" fill="#4a9cab"/><rect x="84" y="30.0" width="3" height="2.5" fill="#60b6c2"/><rect x="87" y="30.0" width="3" height="2.5" fill="#4a9cab"/><rect x="90" y="30.0" width="3" height="2.5" fill="#4fa6b4"/><rect x="93" y="30.0" width="3" height="2.5" fill="#4a9cab"/><rect x="96" y="30.0" width="3" height="2.5" fill="#52a9b6"/><rect x="99" y="30.0" width="3" height="2.5" fill="#5cb2bf"/><rect x="102" y="30.0" width="3" height="2.5" fill="#469aa8"/><rect x="105" y="30.0" width="3" height="2.5" fill="#5cb2bf"/><rect x="108" y="30.0" width="3" height="2.5" fill="#60b6c2"/><rect x="111" y="30.0" width="3" height="2.5" fill="#56aebb"/><rect x="114" y="30.0" width="3" height="2.5" fill="#52a9b6"/><rect x="117" y="30.0" width="3" height="2.5" fill="#469aa8"/><rect x="120" y="30.0" width="3" height="2.5" fill="#4a9cab"/><rect x="123" y="30.0" width="3" height="2.5" fill="#60b6c2"/><rect x="126" y="30.0" width="3" height="2.5" fill="#5cb2bf"/><rect x="129" y="30.0" width="3" height="2.5" fill="#469aa8"/><rect x="132" y="30.0" width="3" height="2.5" fill="#56aebb"/><rect x="135" y="30.0" width="3" height="2.5" fill="#60b6c2"/><rect x="138" y="30.0" width="3" height="2.5" fill="#469aa8"/><rect x="141" y="30.0" width="3" height="2.5" fill="#469aa8"/><rect x="144" y="30.0" width="3" height="2.5" fill="#56aebb"/><rect x="147" y="30.0" width="3" height="2.5" fill="#56aebb"/><rect x="150" y="30.0" width="3" height="2.5" fill="#4fa6b4"/><rect x="153" y="30.0" width="3" height="2.5" fill="#60b6c2"/><rect x="156" y="30.0" width="3" height="2.5" fill="#5cb2bf"/><rect x="159" y="30.0" width="3" height="2.5" fill="#60b6c2"/><rect x="162" y="30.0" width="3" height="2.5" fill="#4a9cab"/><rect x="165" y="30.0" width="3" height="2.5" fill="#60b6c2"/><rect x="168" y="30.0" width="3" height="2.5" fill="#4fa6b4"/><rect x="171" y="30.0" width="3" height="2.5" fill="#56aebb"/><rect x="174" y="30.0" width="3" height="2.5" fill="#469aa8"/><rect x="177" y="30.0" width="3" height="2.5" fill="#4fa6b4"/><rect x="0" y="32.5" width="3" height="2.5" fill="#469aa8"/><rect x="3" y="32.5" width="3" height="2.5" fill="#56aebb"/><rect x="6" y="32.5" width="3" height="2.5" fill="#469aa8"/><rect x="9" y="32.5" width="3" height="2.5" fill="#4a9cab"/><rect x="12" y="32.5" width="3" height="2.5" fill="#4fa6b4"/><rect x="15" y="32.5" width="3" height="2.5" fill="#52a9b6"/><rect x="18" y="32.5" width="3" height="2.5" fill="#60b6c2"/><rect x="21" y="32.5" width="3" height="2.5" fill="#60b6c2"/><rect x="24" y="32.5" width="3" height="2.5" fill="#5cb2bf"/><rect x="27" y="32.5" width="3" height="2.5" fill="#4fa6b4"/><rect x="30" y="32.5" width="3" height="2.5" fill="#469aa8"/><rect x="33" y="32.5" width="3" height="2.5" fill="#469aa8"/><rect x="36" y="32.5" width="3" height="2.5" fill="#4a9cab"/><rect x="39" y="32.5" width="3" height="2.5" fill="#60b6c2"/><rect x="42" y="32.5" width="3" height="2.5" fill="#469aa8"/><rect x="45" y="32.5" width="3" height="2.5" fill="#4fa6b4"/><rect x="48" y="32.5" width="3" height="2.5" fill="#4a9cab"/><rect x="51" y="32.5" width="3" height="2.5" fill="#4fa6b4"/><rect x="54" y="32.5" width="3" height="2.5" fill="#4a9cab"/><rect x="57" y="32.5" width="3" height="2.5" fill="#52a9b6"/><rect x="60" y="32.5" width="3" height="2.5" fill="#4fa6b4"/><rect x="63" y="32.5" width="3" height="2.5" fill="#4a9cab"/><rect x="66" y="32.5" width="3" height="2.5" fill="#4fa6b4"/><rect x="69" y="32.5" width="3" height="2.5" fill="#4fa6b4"/><rect x="72" y="32.5" width="3" height="2.5" fill="#52a9b6"/><rect x="75" y="32.5" width="3" height="2.5" fill="#52a9b6"/><rect x="78" y="32.5" width="3" height="2.5" fill="#56aebb"/><rect x="81" y="32.5" width="3" height="2.5" fill="#4fa6b4"/><rect x="84" y="32.5" width="3" height="2.5" fill="#52a9b6"/><rect x="87" y="32.5" width="3" height="2.5" fill="#60b6c2"/><rect x="90" y="32.5" width="3" height="2.5" fill="#52a9b6"/><rect x="93" y="32.5" width="3" height="2.5" fill="#5cb2bf"/><rect x="96" y="32.5" width="3" height="2.5" fill="#56aebb"/><rect x="99" y="32.5" width="3" height="2.5" fill="#52a9b6"/><rect x="102" y="32.5" width="3" height="2.5" fill="#56aebb"/><rect x="105" y="32.5" width="3" height="2.5" fill="#5cb2bf"/><rect x="108" y="32.5" width="3" height="2.5" fill="#60b6c2"/><rect x="111" y="32.5" width="3" height="2.5" fill="#469aa8"/><rect x="114" y="32.5" width="3" height="2.5" fill="#4a9cab"/><rect x="117" y="32.5" width="3" height="2.5" fill="#60b6c2"/><rect x="120" y="32.5" width="3" height="2.5" fill="#5cb2bf"/><rect x="123" y="32.5" width="3" height="2.5" fill="#5cb2bf"/><rect x="126" y="32.5" width="3" height="2.5" fill="#4a9cab"/><rect x="129" y="32.5" width="3" height="2.5" fill="#4a9cab"/><rect x="132" y="32.5" width="3" height="2.5" fill="#60b6c2"/><rect x="135" y="32.5" width="3" height="2.5" fill="#4a9cab"/><rect x="138" y="32.5" width="3" height="2.5" fill="#52a9b6"/><rect x="141" y="32.5" width="3" height="2.5" fill="#56aebb"/><rect x="144" y="32.5" width="3" height="2.5" fill="#5cb2bf"/><rect x="147" y="32.5" width="3" height="2.5" fill="#5cb2bf"/><rect x="150" y="32.5" width="3" height="2.5" fill="#469aa8"/><rect x="153" y="32.5" width="3" height="2.5" fill="#60b6c2"/><rect x="156" y="32.5" width="3" height="2.5" fill="#52a9b6"/><rect x="159" y="32.5" width="3" height="2.5" fill="#4fa6b4"/><rect x="162" y="32.5" width="3" height="2.5" fill="#52a9b6"/><rect x="165" y="32.5" width="3" height="2.5" fill="#469aa8"/><rect x="168" y="32.5" width="3" height="2.5" fill="#4fa6b4"/><rect x="171" y="32.5" width="3" height="2.5" fill="#5cb2bf"/><rect x="174" y="32.5" width="3" height="2.5" fill="#60b6c2"/><rect x="177" y="32.5" width="3" height="2.5" fill="#60b6c2"/><rect x="0" y="35.0" width="3" height="2.5" fill="#52a9b6"/><rect x="3" y="35.0" width="3" height="2.5" fill="#4a9cab"/><rect x="6" y="35.0" width="3" height="2.5" fill="#60b6c2"/><rect x="9" y="35.0" width="3" height="2.5" fill="#4fa6b4"/><rect x="12" y="35.0" width="3" height="2.5" fill="#60b6c2"/><rect x="15" y="35.0" width="3" height="2.5" fill="#467278"/><rect x="18" y="35.0" width="3" height="2.5" fill="#52a9b6"/><rect x="21" y="35.0" width="3" height="2.5" fill="#6a9898"/><rect x="24" y="35.0" width="3" height="2.5" fill="#60b6c2"/><rect x="27" y="35.0" width="3" height="2.5" fill="#467278"/><rect x="30" y="35.0" width="3" height="2.5" fill="#56aebb"/><rect x="33" y="35.0" width="3" height="2.5" fill="#52a9b6"/><rect x="36" y="35.0" width="3" height="2.5" fill="#4f7e82"/><rect x="39" y="35.0" width="3" height="2.5" fill="#467278"/><rect x="42" y="35.0" width="3" height="2.5" fill="#6a9898"/><rect x="45" y="35.0" width="3" height="2.5" fill="#5a8c8e"/><rect x="48" y="35.0" width="3" height="2.5" fill="#5a8c8e"/><rect x="51" y="35.0" width="3" height="2.5" fill="#4f7e82"/><rect x="54" y="35.0" width="3" height="2.5" fill="#56aebb"/><rect x="57" y="35.0" width="3" height="2.5" fill="#60b6c2"/><rect x="60" y="35.0" width="3" height="2.5" fill="#467278"/><rect x="63" y="35.0" width="3" height="2.5" fill="#4fa6b4"/><rect x="66" y="35.0" width="3" height="2.5" fill="#4f7e82"/><rect x="69" y="35.0" width="3" height="2.5" fill="#4f7e82"/><rect x="72" y="35.0" width="3" height="2.5" fill="#469aa8"/><rect x="75" y="35.0" width="3" height="2.5" fill="#469aa8"/><rect x="78" y="35.0" width="3" height="2.5" fill="#5cb2bf"/><rect x="81" y="35.0" width="3" height="2.5" fill="#56aebb"/><rect x="84" y="35.0" width="3" height="2.5" fill="#4a9cab"/><rect x="87" y="35.0" width="3" height="2.5" fill="#5cb2bf"/><rect x="90" y="35.0" width="3" height="2.5" fill="#56aebb"/><rect x="93" y="35.0" width="3" height="2.5" fill="#60b6c2"/><rect x="96" y="35.0" width="3" height="2.5" fill="#4a9cab"/><rect x="99" y="35.0" width="3" height="2.5" fill="#52a9b6"/><rect x="102" y="35.0" width="3" height="2.5" fill="#60b6c2"/><rect x="105" y="35.0" width="3" height="2.5" fill="#60b6c2"/><rect x="108" y="35.0" width="3" height="2.5" fill="#467278"/><rect x="111" y="35.0" width="3" height="2.5" fill="#4a9cab"/><rect x="114" y="35.0" width="3" height="2.5" fill="#60b6c2"/><rect x="117" y="35.0" width="3" height="2.5" fill="#5cb2bf"/><rect x="120" y="35.0" width="3" height="2.5" fill="#5cb2bf"/><rect x="123" y="35.0" width="3" height="2.5" fill="#4f7e82"/><rect x="126" y="35.0" width="3" height="2.5" fill="#5cb2bf"/><rect x="129" y="35.0" width="3" height="2.5" fill="#60b6c2"/><rect x="132" y="35.0" width="3" height="2.5" fill="#4a9cab"/><rect x="135" y="35.0" width="3" height="2.5" fill="#4fa6b4"/><rect x="138" y="35.0" width="3" height="2.5" fill="#56aebb"/><rect x="141" y="35.0" width="3" height="2.5" fill="#60b6c2"/><rect x="144" y="35.0" width="3" height="2.5" fill="#6a9898"/><rect x="147" y="35.0" width="3" height="2.5" fill="#4f7e82"/><rect x="150" y="35.0" width="3" height="2.5" fill="#469aa8"/><rect x="153" y="35.0" width="3" height="2.5" fill="#5cb2bf"/><rect x="156" y="35.0" width="3" height="2.5" fill="#6a9898"/><rect x="159" y="35.0" width="3" height="2.5" fill="#4f7e82"/><rect x="162" y="35.0" width="3" height="2.5" fill="#469aa8"/><rect x="165" y="35.0" width="3" height="2.5" fill="#5a8c8e"/><rect x="168" y="35.0" width="3" height="2.5" fill="#4f7e82"/><rect x="171" y="35.0" width="3" height="2.5" fill="#4f7e82"/><rect x="174" y="35.0" width="3" height="2.5" fill="#4fa6b4"/><rect x="177" y="35.0" width="3" height="2.5" fill="#5a8c8e"/><rect x="0" y="37.5" width="3" height="2.5" fill="#5cb2bf"/><rect x="3" y="37.5" width="3" height="2.5" fill="#52a9b6"/><rect x="6" y="37.5" width="3" height="2.5" fill="#5cb2bf"/><rect x="9" y="37.5" width="3" height="2.5" fill="#4fa6b4"/><rect x="12" y="37.5" width="3" height="2.5" fill="#469aa8"/><rect x="15" y="37.5" width="3" height="2.5" fill="#469aa8"/><rect x="18" y="37.5" width="3" height="2.5" fill="#4f7e82"/><rect x="21" y="37.5" width="3" height="2.5" fill="#5a8c8e"/><rect x="24" y="37.5" width="3" height="2.5" fill="#5cb2bf"/><rect x="27" y="37.5" width="3" height="2.5" fill="#467278"/><rect x="30" y="37.5" width="3" height="2.5" fill="#56aebb"/><rect x="33" y="37.5" width="3" height="2.5" fill="#4a9cab"/><rect x="36" y="37.5" width="3" height="2.5" fill="#467278"/><rect x="39" y="37.5" width="3" height="2.5" fill="#6a9898"/><rect x="42" y="37.5" width="3" height="2.5" fill="#52a9b6"/><rect x="45" y="37.5" width="3" height="2.5" fill="#4a9cab"/><rect x="48" y="37.5" width="3" height="2.5" fill="#4f7e82"/><rect x="51" y="37.5" width="3" height="2.5" fill="#467278"/><rect x="54" y="37.5" width="3" height="2.5" fill="#52a9b6"/><rect x="57" y="37.5" width="3" height="2.5" fill="#60b6c2"/><rect x="60" y="37.5" width="3" height="2.5" fill="#467278"/><rect x="63" y="37.5" width="3" height="2.5" fill="#467278"/><rect x="66" y="37.5" width="3" height="2.5" fill="#5cb2bf"/><rect x="69" y="37.5" width="3" height="2.5" fill="#5a8c8e"/><rect x="72" y="37.5" width="3" height="2.5" fill="#5a8c8e"/><rect x="75" y="37.5" width="3" height="2.5" fill="#60b6c2"/><rect x="78" y="37.5" width="3" height="2.5" fill="#56aebb"/><rect x="81" y="37.5" width="3" height="2.5" fill="#469aa8"/><rect x="84" y="37.5" width="3" height="2.5" fill="#56aebb"/><rect x="87" y="37.5" width="3" height="2.5" fill="#4a9cab"/><rect x="90" y="37.5" width="3" height="2.5" fill="#52a9b6"/><rect x="93" y="37.5" width="3" height="2.5" fill="#5cb2bf"/><rect x="96" y="37.5" width="3" height="2.5" fill="#469aa8"/><rect x="99" y="37.5" width="3" height="2.5" fill="#52a9b6"/><rect x="102" y="37.5" width="3" height="2.5" fill="#6a9898"/><rect x="105" y="37.5" width="3" height="2.5" fill="#469aa8"/><rect x="108" y="37.5" width="3" height="2.5" fill="#4a9cab"/><rect x="111" y="37.5" width="3" height="2.5" fill="#467278"/><rect x="114" y="37.5" width="3" height="2.5" fill="#4a9cab"/><rect x="117" y="37.5" width="3" height="2.5" fill="#6a9898"/><rect x="120" y="37.5" width="3" height="2.5" fill="#52a9b6"/><rect x="123" y="37.5" width="3" height="2.5" fill="#5cb2bf"/><rect x="126" y="37.5" width="3" height="2.5" fill="#4fa6b4"/><rect x="129" y="37.5" width="3" height="2.5" fill="#5a8c8e"/><rect x="132" y="37.5" width="3" height="2.5" fill="#4f7e82"/><rect x="135" y="37.5" width="3" height="2.5" fill="#467278"/><rect x="138" y="37.5" width="3" height="2.5" fill="#467278"/><rect x="141" y="37.5" width="3" height="2.5" fill="#4fa6b4"/><rect x="144" y="37.5" width="3" height="2.5" fill="#5a8c8e"/><rect x="147" y="37.5" width="3" height="2.5" fill="#5a8c8e"/><rect x="150" y="37.5" width="3" height="2.5" fill="#5a8c8e"/><rect x="153" y="37.5" width="3" height="2.5" fill="#467278"/><rect x="156" y="37.5" width="3" height="2.5" fill="#56aebb"/><rect x="159" y="37.5" width="3" height="2.5" fill="#60b6c2"/><rect x="162" y="37.5" width="3" height="2.5" fill="#467278"/><rect x="165" y="37.5" width="3" height="2.5" fill="#467278"/><rect x="168" y="37.5" width="3" height="2.5" fill="#52a9b6"/><rect x="171" y="37.5" width="3" height="2.5" fill="#6a9898"/><rect x="174" y="37.5" width="3" height="2.5" fill="#60b6c2"/><rect x="177" y="37.5" width="3" height="2.5" fill="#5a8c8e"/><rect x="0" y="40.0" width="3" height="2.5" fill="#4a9cab"/><rect x="3" y="40.0" width="3" height="2.5" fill="#4a9cab"/><rect x="6" y="40.0" width="3" height="2.5" fill="#56aebb"/><rect x="9" y="40.0" width="3" height="2.5" fill="#4a9cab"/><rect x="12" y="40.0" width="3" height="2.5" fill="#467278"/><rect x="15" y="40.0" width="3" height="2.5" fill="#467278"/><rect x="18" y="40.0" width="3" height="2.5" fill="#6a9898"/><rect x="21" y="40.0" width="3" height="2.5" fill="#60b6c2"/><rect x="24" y="40.0" width="3" height="2.5" fill="#4f7e82"/><rect x="27" y="40.0" width="3" height="2.5" fill="#6a9898"/><rect x="30" y="40.0" width="3" height="2.5" fill="#4a9cab"/><rect x="33" y="40.0" width="3" height="2.5" fill="#469aa8"/><rect x="36" y="40.0" width="3" height="2.5" fill="#4f7e82"/><rect x="39" y="40.0" width="3" height="2.5" fill="#469aa8"/><rect x="42" y="40.0" width="3" height="2.5" fill="#52a9b6"/><rect x="45" y="40.0" width="3" height="2.5" fill="#56aebb"/><rect x="48" y="40.0" width="3" height="2.5" fill="#4fa6b4"/><rect x="51" y="40.0" width="3" height="2.5" fill="#56aebb"/><rect x="54" y="40.0" width="3" height="2.5" fill="#56aebb"/><rect x="57" y="40.0" width="3" height="2.5" fill="#467278"/><rect x="60" y="40.0" width="3" height="2.5" fill="#4a9cab"/><rect x="63" y="40.0" width="3" height="2.5" fill="#6a9898"/><rect x="66" y="40.0" width="3" height="2.5" fill="#5a8c8e"/><rect x="69" y="40.0" width="3" height="2.5" fill="#4f7e82"/><rect x="72" y="40.0" width="3" height="2.5" fill="#5a8c8e"/><rect x="75" y="40.0" width="3" height="2.5" fill="#4a9cab"/><rect x="78" y="40.0" width="3" height="2.5" fill="#6a9898"/><rect x="81" y="40.0" width="3" height="2.5" fill="#469aa8"/><rect x="84" y="40.0" width="3" height="2.5" fill="#56aebb"/><rect x="87" y="40.0" width="3" height="2.5" fill="#4fa6b4"/><rect x="90" y="40.0" width="3" height="2.5" fill="#60b6c2"/><rect x="93" y="40.0" width="3" height="2.5" fill="#4fa6b4"/><rect x="96" y="40.0" width="3" height="2.5" fill="#4a9cab"/><rect x="99" y="40.0" width="3" height="2.5" fill="#52a9b6"/><rect x="102" y="40.0" width="3" height="2.5" fill="#56aebb"/><rect x="105" y="40.0" width="3" height="2.5" fill="#4a9cab"/><rect x="108" y="40.0" width="3" height="2.5" fill="#56aebb"/><rect x="111" y="40.0" width="3" height="2.5" fill="#60b6c2"/><rect x="114" y="40.0" width="3" height="2.5" fill="#5a8c8e"/><rect x="117" y="40.0" width="3" height="2.5" fill="#4f7e82"/><rect x="120" y="40.0" width="3" height="2.5" fill="#467278"/><rect x="123" y="40.0" width="3" height="2.5" fill="#52a9b6"/><rect x="126" y="40.0" width="3" height="2.5" fill="#4fa6b4"/><rect x="129" y="40.0" width="3" height="2.5" fill="#467278"/><rect x="132" y="40.0" width="3" height="2.5" fill="#4f7e82"/><rect x="135" y="40.0" width="3" height="2.5" fill="#4fa6b4"/><rect x="138" y="40.0" width="3" height="2.5" fill="#56aebb"/><rect x="141" y="40.0" width="3" height="2.5" fill="#4f7e82"/><rect x="144" y="40.0" width="3" height="2.5" fill="#6a9898"/><rect x="147" y="40.0" width="3" height="2.5" fill="#5a8c8e"/><rect x="150" y="40.0" width="3" height="2.5" fill="#60b6c2"/><rect x="153" y="40.0" width="3" height="2.5" fill="#467278"/><rect x="156" y="40.0" width="3" height="2.5" fill="#5cb2bf"/><rect x="159" y="40.0" width="3" height="2.5" fill="#467278"/><rect x="162" y="40.0" width="3" height="2.5" fill="#5cb2bf"/><rect x="165" y="40.0" width="3" height="2.5" fill="#5cb2bf"/><rect x="168" y="40.0" width="3" height="2.5" fill="#60b6c2"/><rect x="171" y="40.0" width="3" height="2.5" fill="#60b6c2"/><rect x="174" y="40.0" width="3" height="2.5" fill="#5a8c8e"/><rect x="177" y="40.0" width="3" height="2.5" fill="#469aa8"/><rect x="0" y="42.5" width="3" height="2.5" fill="#4a9cab"/><rect x="3" y="42.5" width="3" height="2.5" fill="#469aa8"/><rect x="6" y="42.5" width="3" height="2.5" fill="#469aa8"/><rect x="9" y="42.5" width="3" height="2.5" fill="#5cb2bf"/><rect x="12" y="42.5" width="3" height="2.5" fill="#5a8c8e"/><rect x="15" y="42.5" width="3" height="2.5" fill="#5a8c8e"/><rect x="18" y="42.5" width="3" height="2.5" fill="#467278"/><rect x="21" y="42.5" width="3" height="2.5" fill="#469aa8"/><rect x="24" y="42.5" width="3" height="2.5" fill="#6a9898"/><rect x="27" y="42.5" width="3" height="2.5" fill="#4fa6b4"/><rect x="30" y="42.5" width="3" height="2.5" fill="#467278"/><rect x="33" y="42.5" width="3" height="2.5" fill="#467278"/><rect x="36" y="42.5" width="3" height="2.5" fill="#5cb2bf"/><rect x="39" y="42.5" width="3" height="2.5" fill="#469aa8"/><rect x="42" y="42.5" width="3" height="2.5" fill="#469aa8"/><rect x="45" y="42.5" width="3" height="2.5" fill="#467278"/><rect x="48" y="42.5" width="3" height="2.5" fill="#4fa6b4"/><rect x="51" y="42.5" width="3" height="2.5" fill="#52a9b6"/><rect x="54" y="42.5" width="3" height="2.5" fill="#52a9b6"/><rect x="57" y="42.5" width="3" height="2.5" fill="#467278"/><rect x="60" y="42.5" width="3" height="2.5" fill="#56aebb"/><rect x="63" y="42.5" width="3" height="2.5" fill="#467278"/><rect x="66" y="42.5" width="3" height="2.5" fill="#4fa6b4"/><rect x="69" y="42.5" width="3" height="2.5" fill="#4f7e82"/><rect x="72" y="42.5" width="3" height="2.5" fill="#467278"/><rect x="75" y="42.5" width="3" height="2.5" fill="#4f7e82"/><rect x="78" y="42.5" width="3" height="2.5" fill="#4fa6b4"/><rect x="81" y="42.5" width="3" height="2.5" fill="#4a9cab"/><rect x="84" y="42.5" width="3" height="2.5" fill="#56aebb"/><rect x="87" y="42.5" width="3" height="2.5" fill="#4fa6b4"/><rect x="90" y="42.5" width="3" height="2.5" fill="#5cb2bf"/><rect x="93" y="42.5" width="3" height="2.5" fill="#5cb2bf"/><rect x="96" y="42.5" width="3" height="2.5" fill="#60b6c2"/><rect x="99" y="42.5" width="3" height="2.5" fill="#469aa8"/><rect x="102" y="42.5" width="3" height="2.5" fill="#6a9898"/><rect x="105" y="42.5" width="3" height="2.5" fill="#56aebb"/><rect x="108" y="42.5" width="3" height="2.5" fill="#5a8c8e"/><rect x="111" y="42.5" width="3" height="2.5" fill="#6a9898"/><rect x="114" y="42.5" width="3" height="2.5" fill="#467278"/><rect x="117" y="42.5" width="3" height="2.5" fill="#467278"/><rect x="120" y="42.5" width="3" height="2.5" fill="#56aebb"/><rect x="123" y="42.5" width="3" height="2.5" fill="#5a8c8e"/><rect x="126" y="42.5" width="3" height="2.5" fill="#6a9898"/><rect x="129" y="42.5" width="3" height="2.5" fill="#4fa6b4"/><rect x="132" y="42.5" width="3" height="2.5" fill="#4f7e82"/><rect x="135" y="42.5" width="3" height="2.5" fill="#56aebb"/><rect x="138" y="42.5" width="3" height="2.5" fill="#5a8c8e"/><rect x="141" y="42.5" width="3" height="2.5" fill="#4a9cab"/><rect x="144" y="42.5" width="3" height="2.5" fill="#4a9cab"/><rect x="147" y="42.5" width="3" height="2.5" fill="#4a9cab"/><rect x="150" y="42.5" width="3" height="2.5" fill="#52a9b6"/><rect x="153" y="42.5" width="3" height="2.5" fill="#4a9cab"/><rect x="156" y="42.5" width="3" height="2.5" fill="#60b6c2"/><rect x="159" y="42.5" width="3" height="2.5" fill="#5a8c8e"/><rect x="162" y="42.5" width="3" height="2.5" fill="#6a9898"/><rect x="165" y="42.5" width="3" height="2.5" fill="#4f7e82"/><rect x="168" y="42.5" width="3" height="2.5" fill="#4f7e82"/><rect x="171" y="42.5" width="3" height="2.5" fill="#4a9cab"/><rect x="174" y="42.5" width="3" height="2.5" fill="#4a9cab"/><rect x="177" y="42.5" width="3" height="2.5" fill="#469aa8"/><rect x="15.5" y="28" width="5" height="3.5" fill="#2e5a68"/><rect x="17" y="29" width="2" height="1.5" fill="#8ac0a0"/><rect x="55.5" y="28" width="5" height="3.5" fill="#2e5a68"/><rect x="57" y="29" width="2" height="1.5" fill="#8ac0a0"/><rect x="79.1" y="28" width="5" height="3.5" fill="#2e5a68"/><rect x="80.6" y="29" width="2" height="1.5" fill="#8ac0a0"/><rect x="91.5" y="28" width="5" height="3.5" fill="#2e5a68"/><rect x="93" y="29" width="2" height="1.5" fill="#8ac0a0"/><rect x="143.5" y="28" width="5" height="3.5" fill="#2e5a68"/><rect x="145" y="29" width="2" height="1.5" fill="#8ac0a0"/><rect x="155.5" y="28" width="5" height="3.5" fill="#2e5a68"/><rect x="157" y="29" width="2" height="1.5" fill="#8ac0a0"/></g>
<g shape-rendering="auto"><circle cx="89.6" cy="3.6" r="4" fill="#ffe800"/>
<circle cx="89.6" cy="21.2" r="5.6" fill="none" stroke="#f2f2f2" stroke-width="1.3"/>
<line x1="89.6" y1="14.4" x2="89.6" y2="17.4" stroke="#f2f2f2" stroke-width="1"/>
<circle cx="100.8" cy="21.4" r="2.6" fill="#ffe800"/>
<rect x="127.5" y="18.2" width="6.7" height="6.8" fill="#ffe800"/>
<rect x="27.1" y="27.1" width="5.4" height="5.2" fill="#7ce020"/>
<circle cx="38.9" cy="27.4" r="2.6" fill="#0a28ff"/>
<rect x="44.7" y="28.7" width="8.2" height="5.5" fill="#0a28ff"/>
</g></svg>
<svg class="a" style="left:460px;top:136.5px" width="11" height="10" viewBox="0 0 11 10"><circle cx="5.4" cy="5" r="4.2" fill="#f03a10"/><circle cx="5.4" cy="5" r="3.2" fill="#ffb000"/><text x="5.4" y="7.4" font-size="6.5" text-anchor="middle" fill="#f03a10" font-family="Liberation Sans" font-weight="bold">30</text></svg>

<!-- 50 boxes -->
<div class="a box50" style="left:618.7px;top:95.4px"><span>50</span></div>
<div class="a box50" style="left:648.1px;top:95.4px"><span>50</span></div>
<div class="a box50" style="left:677.3px;top:95.4px"><span>50</span></div>
<div class="a box50" style="left:618.7px;top:126.1px"><span>50</span></div>
<div class="a box50" style="left:648.1px;top:126.1px"><span>50</span></div>
<div class="a box50" style="left:677.3px;top:126.1px"><span>50</span></div>
<!-- HUD -->
<div class="t" style="left:750px;top:102.2px;font-size:14.5px;color:#1ab4e6">0</div>
<div class="t" style="left:771.4px;top:105.2px;font-size:11.4px;color:#eaeaea">VS</div>
<div class="t" style="left:795.7px;top:102.2px;font-size:14.5px;color:#e84a4a">0</div>
<svg class="a" style="left:849.5px;top:100.5px" width="8" height="17" viewBox="0 0 8 17"><path d="M3.8 0.6 C5.2 0.6 5.4 2 5.2 4 L4.8 10.8 L2.8 10.8 L2.4 4 C2.2 2 2.4 0.6 3.8 0.6Z" fill="#c8e0f4"/><rect x="1.8" y="11" width="4" height="1.4" fill="#1a2a3a"/><rect x="3" y="12.4" width="1.6" height="3" fill="#8ab0d0"/><circle cx="3.8" cy="15.6" r="1" fill="#4a6a8a"/></svg>
<div class="t" style="left:859.5px;top:102.5px;font-size:13.5px;color:#eaeaea">0</div>
<svg class="a" style="left:880.5px;top:102px" width="11" height="13" viewBox="0 0 11 13"><path d="M5.5 0.5 C9 0.5 10.6 2.6 10.6 5.4 C10.6 7.4 9.6 8.2 8.8 8.8 L8.8 11.4 L7.4 12.2 L6.6 11 L5.5 12.2 L4.4 11 L3.6 12.2 L2.2 11.4 L2.2 8.8 C1.4 8.2 0.4 7.4 0.4 5.4 C0.4 2.6 2 0.5 5.5 0.5Z" fill="#9ac8ec"/><ellipse cx="3.6" cy="6" rx="1.5" ry="1.7" fill="#2a4a66"/><ellipse cx="7.4" cy="6" rx="1.5" ry="1.7" fill="#2a4a66"/><path d="M5.5 7.6 L4.8 9 L6.2 9Z" fill="#2a4a66"/></svg>
<div class="t" style="left:895.5px;top:102.5px;font-size:13.5px;color:#eaeaea">0</div>
<svg class="a" style="left:912px;top:102.5px" width="13" height="12" viewBox="0 0 13 12"><path d="M1.5 3.4 L3.6 1.2 L5.4 2 L7.4 0.6 L9.6 1.6 L11.6 1.4 L12.4 4.6 L11 8 L9.6 11.4 L4.4 11.4 L3 8.4 L0.6 6Z" fill="#9ac8ec"/><path d="M4.2 3.8 L5.6 6 M7 3 L8 5.6 M9.6 3.4 L10.2 5.8" stroke="#4a7aa0" stroke-width="0.8"/></svg>
<div class="t" style="left:927.5px;top:102.5px;font-size:13.5px;color:#eaeaea">0</div>
<div class="t" style="left:980px;top:104px;font-size:11.6px;color:#eaeaea">FPS:0</div>
<svg class="a" style="left:1026.9px;top:102.6px" width="17" height="13" viewBox="0 0 17 13"><rect x="0" y="9" width="2.6" height="4" fill="#22e02a"/><rect x="3.4" y="7" width="2.6" height="6" fill="#22e02a"/><rect x="6.8" y="5" width="2.6" height="8" fill="#22e02a"/><rect x="10.2" y="2.6" width="2.6" height="10.4" fill="#22e02a"/><rect x="13.6" y="0.2" width="2.8" height="12.8" fill="#22e02a"/></svg>
<div class="t" style="left:1046.6px;top:104.8px;font-size:10.6px;color:#eaeaea;letter-spacing:-0.2px">66ms</div>
<!-- exit -->
<div class="a" style="left:1149.7px;top:100.2px;width:65.4px;height:26.2px;background:linear-gradient(90deg,#fff6d8 0%,#f6e2b0 45%,#efc170 100%)"></div>
<div class="t" style="left:1165.4px;top:106.4px;font-size:15.5px;font-weight:bold;font-style:italic;color:#141414;-webkit-text-stroke:0.5px #141414">退出</div>
<!-- right icons -->
<svg class="a" style="left:1188.5px;top:142.5px" width="27" height="25" viewBox="0 0 27 25"><rect x="0" y="0" width="26.6" height="24.8" fill="#26301e"/><rect x="2" y="2" width="8" height="6" fill="#34402a" opacity="0.7"/><rect x="14" y="15" width="10" height="8" fill="#3a462c" opacity="0.6"/><rect x="0" y="20" width="6" height="4.8" fill="#1c2418"/><rect x="3.6" y="4" width="3.2" height="3" fill="#cbbd8e"/><rect x="8.6" y="4" width="14" height="3" fill="#cbbd8e"/><rect x="3.6" y="11" width="3.2" height="3" fill="#cbbd8e"/><rect x="8.6" y="11" width="14" height="3" fill="#cbbd8e"/><rect x="3.6" y="18" width="3.2" height="3" fill="#cbbd8e"/><rect x="8.6" y="18" width="14" height="3" fill="#cbbd8e"/></svg>
<svg class="a" style="left:1188.5px;top:174px" width="26" height="26" viewBox="0 0 26 26"><circle cx="13" cy="13" r="12.5" fill="#0c3344"/><circle cx="13" cy="13" r="12" fill="none" stroke="#1a5566" stroke-width="1"/><path d="M5.2 7.4 L20.8 7.4 L20.8 17 L10 17 L6.4 19.8 L6.8 17 L5.2 17Z" fill="#30a4e4"/><circle cx="9.4" cy="12.2" r="1.3" fill="#0c3344"/><circle cx="13" cy="12.2" r="1.3" fill="#0c3344"/><circle cx="16.6" cy="12.2" r="1.3" fill="#0c3344"/></svg>
<svg class="a" style="left:1188.5px;top:206.5px" width="26" height="26" viewBox="0 0 26 26"><circle cx="13" cy="13" r="12.6" fill="#5a3018"/><circle cx="13" cy="13" r="11.8" fill="#e2c48e"/><circle cx="13" cy="13" r="10.4" fill="#a84e22"/><circle cx="13" cy="12" r="8.6" fill="#c0622c" opacity="0.6"/><path d="M11.2 4.6 L14.8 4.6 L13.8 16 L12.2 16Z" fill="#f6e6c0"/><circle cx="13" cy="19" r="1.7" fill="#f6e6c0"/></svg>


<!-- joystick -->
<svg class="a" style="left:400px;top:350px" width="130" height="100" viewBox="0 0 130 100">
<defs>
<radialGradient id="jbg" cx="0.5" cy="0.5" r="0.5"><stop offset="0" stop-color="#5c4e38" stop-opacity="0.36"/><stop offset="0.9" stop-color="#4e4230" stop-opacity="0.42"/><stop offset="1" stop-color="#6e604a" stop-opacity="0.42"/></radialGradient><linearGradient id="stg" x1="0" y1="0" x2="1" y2="1"><stop offset="0" stop-color="#f0dcb0"/><stop offset="0.5" stop-color="#e8cc96"/><stop offset="1" stop-color="#dcae68"/></linearGradient>
<radialGradient id="jc" cx="0.5" cy="0.5" r="0.5"><stop offset="0" stop-color="#b8b8b0"/><stop offset="0.45" stop-color="#d8b080"/><stop offset="1" stop-color="#e0a858"/></radialGradient>
<linearGradient id="cres" x1="0" y1="0" x2="0" y2="1"><stop offset="0" stop-color="#7a6a50"/><stop offset="0.5" stop-color="#e8dcc0"/><stop offset="1" stop-color="#7a6a50"/></linearGradient>
</defs>
<circle cx="54.8" cy="49.8" r="49" fill="url(#jbg)"/>
<path d="M54.40 23.60 L60.06 35.73 L68.90 34.90 L68.07 43.74 L80.20 49.40 L68.07 55.06 L68.90 63.90 L60.06 63.07 L54.40 75.20 L48.74 63.07 L39.90 63.90 L40.73 55.06 L28.60 49.40 L40.73 43.74 L39.90 34.90 L48.74 35.73Z" fill="url(#stg)"/>
<circle cx="54.4" cy="49.4" r="14.8" fill="#2c2a26"/>
<circle cx="54.4" cy="49.4" r="12.6" fill="url(#jc)"/>
<path d="M93.5 16.6 C108 26 113 40 112 50 C111 62 104 76 93.5 83.3 C103 72 106 60 106 50 C106 38 102 26 93.5 16.6Z" fill="url(#cres)"/>
<path d="M93.5 17 C103 28 106 40 106 50 C106 60 103 72 93.5 83 C99 72 102 62 102 50 C102 38 99 28 93.5 17Z" fill="#1e1e1e" opacity="0.8"/>
<path d="M127 50 L111 41.5 L112.5 50 L111 58.5Z" fill="#e6d6b0"/>
<path d="M124 50 L113.5 45.5 L114.5 50 L113.5 54.5Z" fill="#e0a858"/>
</svg>
<svg width="0" height="0" style="position:absolute"><defs>
<radialGradient id="sg" cx="0.5" cy="0.5" r="0.5"><stop offset="0" stop-color="#9a9a9a"/><stop offset="0.75" stop-color="#8e8e8e"/><stop offset="1" stop-color="#5a5a5a"/></radialGradient>
<radialGradient id="bg2" cx="0.5" cy="0.5" r="0.5"><stop offset="0" stop-color="#969696"/><stop offset="0.72" stop-color="#8a8a8a"/><stop offset="1" stop-color="#505050"/></radialGradient><linearGradient id="gring" x1="0" y1="0" x2="0" y2="1"><stop offset="0" stop-color="#eadcae"/><stop offset="1" stop-color="#c89c58"/></linearGradient>
</defs></svg>











<svg class="a" style="left:1097.0px;top:307.1px" width="60.4" height="60.4" viewBox="-30.2 -30.2 60.4 60.4"><circle r="28.9" fill="url(#gring)"/><circle r="27.4" fill="#3a3a3a"/><circle r="26.7" fill="url(#bg2)"/><text x="0" y="6.3" font-family="Liberation Sans" font-size="16.2" fill="#f6f6f6" text-anchor="middle">10</text><text x="0" y="21.6" font-family="Liberation Sans" font-size="10.5" font-weight="bold" fill="#fff" stroke="#111" stroke-width="2.2" paint-order="stroke" text-anchor="middle">伤害</text></svg><svg class="a" style="left:1025.4px;top:343.6px" width="60.4" height="60.4" viewBox="-30.2 -30.2 60.4 60.4"><circle r="28.9" fill="url(#gring)"/><circle r="27.4" fill="#3a3a3a"/><circle r="26.7" fill="url(#bg2)"/><text x="0" y="6.3" font-family="Liberation Sans" font-size="16.2" fill="#f6f6f6" text-anchor="middle">10</text><text x="0" y="21.6" font-family="Liberation Sans" font-size="10.5" font-weight="bold" fill="#fff" stroke="#111" stroke-width="2.2" paint-order="stroke" text-anchor="middle">伤害</text></svg><svg class="a" style="left:997.4px;top:418.1px" width="60.4" height="60.4" viewBox="-30.2 -30.2 60.4 60.4"><circle r="28.9" fill="url(#gring)"/><circle r="27.4" fill="#3a3a3a"/><circle r="26.7" fill="url(#bg2)"/><text x="0" y="6.3" font-family="Liberation Sans" font-size="16.2" fill="#f6f6f6" text-anchor="middle">10</text><text x="0" y="21.6" font-family="Liberation Sans" font-size="10.5" font-weight="bold" fill="#fff" stroke="#111" stroke-width="2.2" paint-order="stroke" text-anchor="middle">伤害</text></svg>
<svg class="a" style="left:877.9px;top:415.8px" width="38.8" height="38.8" viewBox="-19.4 -19.4 38.8 38.8"><circle r="17.6" fill="url(#gring)"/><circle r="16.4" fill="#3a3a3a"/><circle r="15.7" fill="url(#sg)"/><text x="0" y="3.6" font-family="Liberation Sans" font-size="9.8" fill="#f0f0f0" text-anchor="middle" transform="scale(0.9,1)">50</text><text x="8.4" y="12.4" font-family="Liberation Sans" font-size="11.4" fill="#f6f6f6" text-anchor="middle" transform="translate(8.4 0) scale(0.85 1) translate(-8.4 0)">0</text></svg><svg class="a" style="left:917.6px;top:415.8px" width="38.8" height="38.8" viewBox="-19.4 -19.4 38.8 38.8"><circle r="17.6" fill="url(#gring)"/><circle r="16.4" fill="#3a3a3a"/><circle r="15.7" fill="url(#sg)"/><text x="0" y="3.6" font-family="Liberation Sans" font-size="9.8" fill="#f0f0f0" text-anchor="middle" transform="scale(0.9,1)">50</text><text x="8.4" y="12.4" font-family="Liberation Sans" font-size="11.4" fill="#f6f6f6" text-anchor="middle" transform="translate(8.4 0) scale(0.85 1) translate(-8.4 0)">0</text></svg><svg class="a" style="left:859.6px;top:455.4px" width="38.8" height="38.8" viewBox="-19.4 -19.4 38.8 38.8"><circle r="17.6" fill="url(#gring)"/><circle r="16.4" fill="#3a3a3a"/><circle r="15.7" fill="url(#sg)"/><text x="0" y="3.6" font-family="Liberation Sans" font-size="9.8" fill="#f0f0f0" text-anchor="middle" transform="scale(0.9,1)">50</text><text x="8.4" y="12.4" font-family="Liberation Sans" font-size="11.4" fill="#f6f6f6" text-anchor="middle" transform="translate(8.4 0) scale(0.85 1) translate(-8.4 0)">0</text></svg><svg class="a" style="left:900.5px;top:455.4px" width="38.8" height="38.8" viewBox="-19.4 -19.4 38.8 38.8"><circle r="17.6" fill="url(#gring)"/><circle r="16.4" fill="#3a3a3a"/><circle r="15.7" fill="url(#sg)"/><text x="0" y="3.6" font-family="Liberation Sans" font-size="9.8" fill="#f0f0f0" text-anchor="middle" transform="scale(0.9,1)">50</text><text x="8.4" y="12.4" font-family="Liberation Sans" font-size="11.4" fill="#f6f6f6" text-anchor="middle" transform="translate(8.4 0) scale(0.85 1) translate(-8.4 0)">0</text></svg><svg class="a" style="left:940.9px;top:455.4px" width="38.8" height="38.8" viewBox="-19.4 -19.4 38.8 38.8"><circle r="17.6" fill="url(#gring)"/><circle r="16.4" fill="#3a3a3a"/><circle r="15.7" fill="url(#sg)"/><text x="0" y="3.6" font-family="Liberation Sans" font-size="9.8" fill="#f0f0f0" text-anchor="middle" transform="scale(0.9,1)">50</text><text x="8.4" y="12.4" font-family="Liberation Sans" font-size="11.4" fill="#f6f6f6" text-anchor="middle" transform="translate(8.4 0) scale(0.85 1) translate(-8.4 0)">0</text></svg><svg class="a" style="left:1122.9px;top:369.1px" width="38.8" height="38.8" viewBox="-19.4 -19.4 38.8 38.8"><circle r="17.6" fill="url(#gring)"/><circle r="16.4" fill="#3a3a3a"/><circle r="15.7" fill="url(#sg)"/><text x="0" y="3.6" font-family="Liberation Sans" font-size="9.8" fill="#f0f0f0" text-anchor="middle" transform="scale(0.9,1)">50</text><text x="8.4" y="12.4" font-family="Liberation Sans" font-size="11.4" fill="#f6f6f6" text-anchor="middle" transform="translate(8.4 0) scale(0.85 1) translate(-8.4 0)">0</text></svg><svg class="a" style="left:1071.1px;top:390.3px" width="38.8" height="38.8" viewBox="-19.4 -19.4 38.8 38.8"><circle r="17.6" fill="url(#gring)"/><circle r="16.4" fill="#3a3a3a"/><circle r="15.7" fill="url(#sg)"/><text x="0" y="3.6" font-family="Liberation Sans" font-size="9.8" fill="#f0f0f0" text-anchor="middle" transform="scale(0.9,1)">50</text><text x="8.4" y="12.4" font-family="Liberation Sans" font-size="11.4" fill="#f6f6f6" text-anchor="middle" transform="translate(8.4 0) scale(0.85 1) translate(-8.4 0)">0</text></svg><svg class="a" style="left:1058.9px;top:442.5px" width="38.8" height="38.8" viewBox="-19.4 -19.4 38.8 38.8"><circle r="17.6" fill="url(#gring)"/><circle r="16.4" fill="#3a3a3a"/><circle r="15.7" fill="url(#sg)"/><text x="0" y="3.6" font-family="Liberation Sans" font-size="9.8" fill="#f0f0f0" text-anchor="middle" transform="scale(0.9,1)">50</text><text x="8.4" y="12.4" font-family="Liberation Sans" font-size="11.4" fill="#f6f6f6" text-anchor="middle" transform="translate(8.4 0) scale(0.85 1) translate(-8.4 0)">0</text></svg>
<svg class="a" style="left:1100px;top:414px" width="80" height="80" viewBox="0 0 80 80">
<defs><radialGradient id="atk" cx="0.5" cy="0.5" r="0.5"><stop offset="0" stop-color="#101010"/><stop offset="0.8" stop-color="#181818"/><stop offset="1" stop-color="#262626"/></radialGradient>
<linearGradient id="sw" x1="0" y1="0" x2="1" y2="1"><stop offset="0" stop-color="#fff4d8"/><stop offset="0.55" stop-color="#f2d49a"/><stop offset="1" stop-color="#e6ae58"/></linearGradient>
<linearGradient id="arcg" x1="0" y1="0" x2="1" y2="1"><stop offset="0" stop-color="#bbb" stop-opacity="0"/><stop offset="0.5" stop-color="#c8c8c8" stop-opacity="0.8"/><stop offset="1" stop-color="#bbb" stop-opacity="0"/></linearGradient></defs>
<circle cx="40" cy="39.3" r="38.8" fill="#d4b07a"/>
<circle cx="40" cy="39.3" r="37.6" fill="url(#atk)"/>
<g fill="none" stroke="url(#arcg)" stroke-width="1.3">
<path d="M32 12.5 A27 27 0 0 1 66.5 45"/>
<path d="M38 17.5 A21 21 0 0 1 60.5 44"/>
<path d="M13.5 33 A27 27 0 0 0 46 66"/>
<path d="M20 36 A20.5 20.5 0 0 0 42 59.5"/>
<path d="M27 40 A13.5 13.5 0 0 0 39 52.5"/>
</g>
<path d="M8.3 8.6 L27.9 17.1 L56.5 46.2 L47.2 55.2 L17.4 26.9Z" fill="url(#sw)"/>
<path d="M31 29 L49.5 48" stroke="#2a2418" stroke-width="1.1" opacity="0.8"/>
<path d="M50.8 40 L58 44.6 L68.4 51 L65.6 53.8 L60.5 51.5 L57 56.5 L53.8 61.5 L55.5 66 L51.8 67.4 L47 59.4 L40.6 50.4 L46.4 52.6 L52.5 46.5Z" fill="url(#sw)"/>
<path d="M56.5 57 L71 69" stroke="#eab664" stroke-width="3.2"/>
<path d="M74.5 72 L66.8 69.4 L71.6 64.8Z" fill="#eab664"/>
</svg>
<!-- huicheng -->
<svg class="a" style="left:804px;top:431px" width="38" height="36" viewBox="0 0 38 36">
<defs><radialGradient id="orb" cx="0.5" cy="0.5" r="0.5"><stop offset="0" stop-color="#2aa6b6"/><stop offset="0.75" stop-color="#17788a"/><stop offset="1" stop-color="#0c4c5c"/></radialGradient></defs>
<circle cx="18.9" cy="18.2" r="16.6" fill="#c4a66c"/>
<circle cx="18.9" cy="18.2" r="15.7" fill="url(#orb)"/>
<path d="M14 28 L15.5 6 L17.2 2.5 L18.6 8 L19.5 4 L21.2 10 L22.5 28Z" fill="#5ef0f4"/>
<path d="M16.4 28 L17.2 5 L18.4 28Z" fill="#d8ffff"/>
<path d="M4.5 19 C8 15.5 26 14.5 31 17.5" fill="none" stroke="#a8d8dc" stroke-width="0.9" opacity="0.75"/>
<path d="M6 22 C12 24.6 27 25 34.5 22.5" fill="none" stroke="#a8d8dc" stroke-width="0.9" opacity="0.7"/>
<rect x="6" y="27" width="26" height="2.5" fill="#20d0d8" opacity="0.5"/>
<path d="M4 26.5 C0.5 28.5 2.5 30.5 8 30.6 M33.5 26.5 C37 28.5 35 30.5 29.5 30.6" fill="none" stroke="#c4a66c" stroke-width="1.2"/>
</svg>
<div class="t" style="left:809.6px;top:460px;font-size:12.8px;font-weight:bold;color:#fff;text-shadow:-1px 0 #111,1px 0 #111,0 -1px #111,0 1px #111,-1px -1px #111,1px 1px #111,-1px 1px #111,1px -1px #111">回城</div>

<!-- scene overlay -->
<div class="a" style="left:346px;top:90px;width:899px;height:418.9px;border:1.8px solid #1c7cc2"></div>
<div class="t rl" style="left:344px;top:494.7px">0</div>
<div class="t rl" style="left:344px;top:429.5px">100</div>
<div class="t rl" style="left:344px;top:364.3px">200</div>
<div class="t rl" style="left:344px;top:299.1px">300</div>
<div class="t rl" style="left:344px;top:233.9px">400</div>
<div class="t rl" style="left:344px;top:168.7px">500</div>
<div class="t rl" style="left:344px;top:103.5px">600</div>
<div class="t rl" style="left:351.3px;top:527.8px">0</div>
<div class="t rl" style="left:416.5px;top:527.8px">100</div>
<div class="t rl" style="left:481.7px;top:527.8px">200</div>
<div class="t rl" style="left:546.9px;top:527.8px">300</div>
<div class="t rl" style="left:612.1px;top:527.8px">400</div>
<div class="t rl" style="left:677.3px;top:527.8px">500</div>
<div class="t rl" style="left:742.5px;top:527.8px">600</div>
<div class="t rl" style="left:807.7px;top:527.8px">700</div>
<div class="t rl" style="left:872.9px;top:527.8px">800</div>
<div class="t rl" style="left:938.1px;top:527.8px">900</div>
<div class="t rl" style="left:1003.3px;top:527.8px">1000</div>
<div class="t rl" style="left:1068.5px;top:527.8px">1100</div>
<div class="t rl" style="left:1133.7px;top:527.8px">1200</div>
<div class="t rl" style="left:1198.9px;top:527.8px">1300</div>

<!-- scene toolbar -->
<div class="a tbg" style="left:347px;top:63.5px;width:18px;height:18px"></div>
<div class="t" style="left:349.8px;top:68.4px;font-size:10.3px;color:#bcbcbc;letter-spacing:-0.4px">2D</div>
<div class="a tbg" style="left:372px;top:63.5px;width:95px;height:18px"></div>
<div class="a" style="left:372px;top:63.5px;width:19px;height:18px;background:#0a4f62;border-radius:3px 0 0 3px"></div>
<svg class="a" style="left:375px;top:66px" width="13" height="13" viewBox="0 0 13 13"><path d="M6.5 0.4 L9.3 3.3 L3.7 3.3Z M6.5 12.6 L9.3 9.7 L3.7 9.7Z M0.4 6.5 L3.3 3.7 L3.3 9.3Z M12.6 6.5 L9.7 3.7 L9.7 9.3Z" fill="#f2f6f8"/><path d="M6.5 3 L6.5 10 M3 6.5 L10 6.5" stroke="#f2f6f8" stroke-width="1.2"/></svg>
<svg class="a" style="left:394.5px;top:67.5px" width="12" height="11" viewBox="0 0 12 11"><path d="M4.6 0.9 A5 5 0 0 0 2.6 8" fill="none" stroke="#a4a4a4" stroke-width="1.5"/><path d="M7.2 10.1 A5 5 0 0 0 9.2 3" fill="none" stroke="#a4a4a4" stroke-width="1.5"/><path d="M0.8 10.4 L5 10.4 L1.6 6.2Z M10.9 0.5 L6.7 0.6 L10.1 4.8Z" fill="#a4a4a4"/></svg>
<svg class="a" style="left:414.5px;top:67.5px" width="11" height="10" viewBox="0 0 11 10"><rect x="0.4" y="4.6" width="5.4" height="5" fill="#9c9c9c"/><path d="M2.4 3.4 L2.4 2.4 L7.6 2.4 L7.6 7.6 L6.8 7.6" fill="none" stroke="#9c9c9c" stroke-width="1.2"/><path d="M2.6 1.1 L2.6 0.7 L9.8 0.7 L9.8 9.4 L8.8 9.4" fill="none" stroke="#9c9c9c" stroke-width="1.2"/></svg>
<svg class="a" style="left:433.5px;top:67.5px" width="11" height="10" viewBox="0 0 11 10"><rect x="1.3" y="1.3" width="8.4" height="7.4" fill="none" stroke="#9c9c9c" stroke-width="1.2"/><circle cx="1.3" cy="1.3" r="1.2" fill="#9c9c9c"/><circle cx="9.7" cy="1.3" r="1.2" fill="#9c9c9c"/><circle cx="1.3" cy="8.7" r="1.2" fill="#9c9c9c"/><circle cx="9.7" cy="8.7" r="1.2" fill="#9c9c9c"/></svg>
<svg class="a" style="left:453.5px;top:67.5px" width="9" height="10" viewBox="0 0 9 10"><path d="M1 0.5 L1 5.5 A3.5 3.5 0 0 0 8 5.5 L8 0.5" fill="none" stroke="#9c9c9c" stroke-width="1.3"/></svg>
<div class="a tbg" style="left:474.6px;top:63.5px;width:37.2px;height:17.5px"></div>
<svg class="a" style="left:478.5px;top:67.5px" width="11" height="11" viewBox="0 0 11 11"><path d="M1.2 5 L1.2 1 L9.6 1 L9.6 9.6 L5 9.6" fill="none" stroke="#a0a0a0" stroke-width="1.2"/><circle cx="1.8" cy="9" r="1.4" fill="#a0a0a0"/></svg>
<svg class="a" style="left:497px;top:67px" width="11" height="12" viewBox="0 0 11 12"><path d="M5 0.8 L9.3 3 L9.3 6 M5 0.8 L0.7 3 L0.7 8 L4 10 M0.7 3 L5 5.2 L9.3 3 M5 5.2 L5 8.5" fill="none" stroke="#a0a0a0" stroke-width="1"/><circle cx="8.3" cy="9" r="1.8" fill="#a0a0a0"/></svg>
<div class="a tbg" style="left:519.2px;top:63.5px;width:18px;height:17.5px"></div>
<svg class="a" style="left:522px;top:67.5px" width="13" height="11" viewBox="0 0 13 11"><rect x="0.8" y="0.5" width="1.2" height="9.4" fill="#a0a0a0"/><rect x="2.8" y="3" width="1" height="4.4" fill="#c0c0c0"/><rect x="4.6" y="0.5" width="1.2" height="9.4" fill="#a0a0a0"/><path d="M7.3 4.6 L9 6 L10.7 4.6" fill="none" stroke="#a0a0a0" stroke-width="1"/></svg>
<!-- right toolbar -->
<div class="a tbg" style="left:1170px;top:63.8px;width:74.3px;height:17.4px"></div>
<svg class="a" style="left:1173px;top:67.5px" width="12" height="10" viewBox="0 0 12 10"><rect x="0.6" y="0.6" width="10.4" height="9" fill="none" stroke="#999" stroke-width="1.2"/><rect x="3" y="2.4" width="1" height="5.4" fill="#999"/><rect x="7.6" y="2.4" width="1" height="5.4" fill="#999"/><rect x="5.3" y="3.2" width="1" height="1" fill="#999"/><rect x="5.3" y="5.8" width="1" height="1" fill="#999"/></svg>
<svg class="a" style="left:1191.5px;top:67px" width="11" height="11" viewBox="0 0 11 11"><rect x="0.6" y="4.2" width="6.8" height="5.4" fill="none" stroke="#999" stroke-width="1.2"/><path d="M7.4 6.9 L10.6 4.6 L10.6 9.2Z" fill="#999"/><path d="M1.6 1.9 L4 1.9 M2.8 0.7 L2.8 3.1 M4.6 3 L6.2 1" stroke="#999" stroke-width="1"/></svg>
<svg class="a" style="left:1211.5px;top:67.5px" width="11" height="11" viewBox="0 0 11 11"><circle cx="5.5" cy="5.5" r="3.6" fill="none" stroke="#a4a4a4" stroke-width="2.2"/><circle cx="5.5" cy="1.5" r="1.4" fill="#a4a4a4"/><circle cx="5.5" cy="9.5" r="1.4" fill="#a4a4a4"/><circle cx="2" cy="3.5" r="1.4" fill="#a4a4a4"/><circle cx="9" cy="3.5" r="1.4" fill="#a4a4a4"/><circle cx="2" cy="7.5" r="1.4" fill="#a4a4a4"/><circle cx="9" cy="7.5" r="1.4" fill="#a4a4a4"/></svg>
<svg class="a" style="left:1230px;top:67.5px" width="12" height="11" viewBox="0 0 12 11"><path d="M1.2 9.6 L1.2 0.7 L9.6 0.7 L9.6 3.2" fill="none" stroke="#999" stroke-width="1.2"/><rect x="3" y="2.4" width="1" height="1" fill="#999"/><rect x="3" y="4.4" width="1" height="1" fill="#999"/><path d="M1.2 9.6 L4 9.6" stroke="#999" stroke-width="1.2"/><circle cx="8.4" cy="7.4" r="2.2" fill="none" stroke="#999" stroke-width="1.2"/></svg>

</body></html>
